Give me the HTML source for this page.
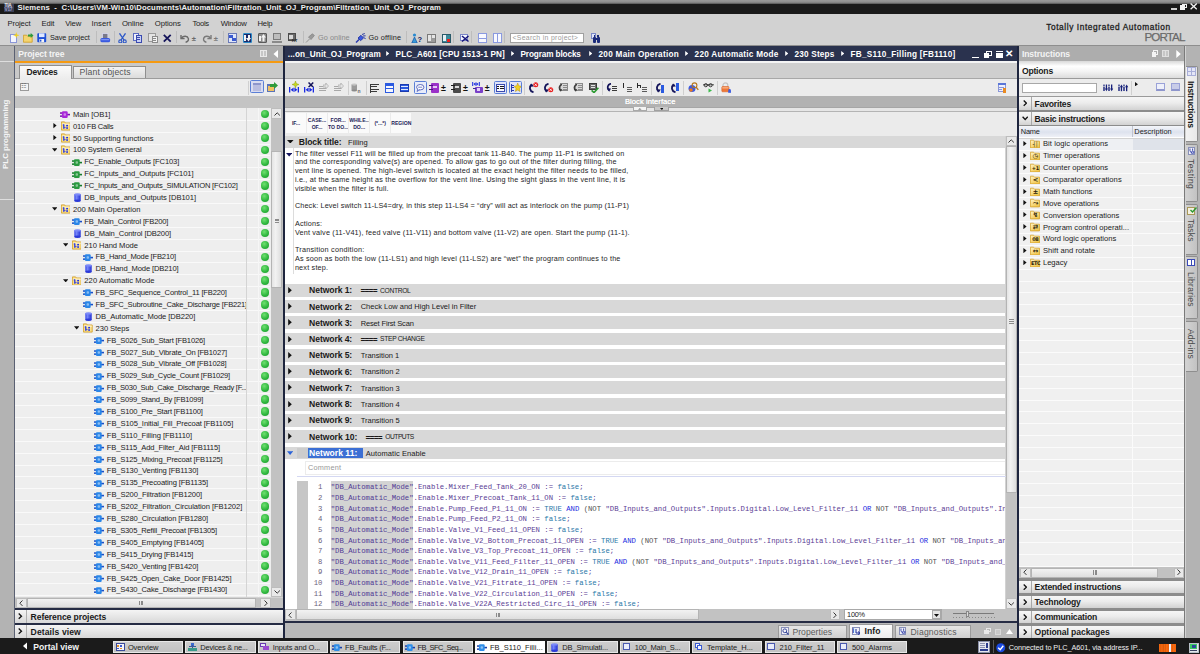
<!DOCTYPE html><html><head><meta charset="utf-8"><title>Siemens - Filtration_Unit_OJ_Program</title><style>
html,body{margin:0;padding:0;}
body{width:1200px;height:654px;overflow:hidden;background:#d2d2d2;font-family:"Liberation Sans",sans-serif;position:relative;}
#r{position:absolute;left:0;top:0;width:1200px;height:654px;overflow:hidden;}
#r div,#r span,#r svg{position:absolute;}
#r span{white-space:pre;}
.m{font-family:"Liberation Mono",monospace;}
</style></head><body><div id="r">
<div style="left:0px;top:0px;width:1200px;height:4.6px;background:linear-gradient(#9a9a9a,#8c8c8c 45%,#5a5a5a 75%,#1c1c1c);"></div>
<div style="left:0px;top:4.4px;width:1200px;height:9.5px;background:#1a1a1a;"></div>
<span style="left:17.4px;top:3.18px;font-size:7.7px;line-height:9.24px;color:#f0f0f0;font-weight:bold;letter-spacing:0.119px;">Siemens  -  C:\Users\VM-Win10\Documents\Automation\Filtration_Unit_OJ_Program\Filtration_Unit_OJ_Program</span>
<div style="left:3.6px;top:3.9px;width:10px;height:8.6px;background:#3a3f55;"></div>
<span style="left:4.6px;top:3.32px;font-size:4.8px;line-height:5.76px;color:#e8e8e8;font-weight:bold;letter-spacing:-0.3px;">TIA</span>
<span style="left:4.6px;top:7.42px;font-size:4.8px;line-height:5.76px;color:#9aa0c8;font-weight:bold;letter-spacing:-0.3px;">V17</span>
<div style="left:1170.5px;top:8.2px;width:6px;height:1.6px;background:#d0d0d0;"></div>
<div style="left:1182px;top:3.7px;width:4.6px;height:4.6px;background:transparent;border:1.1px solid #f0f0f0;box-sizing:border-box;"></div>
<div style="left:1180.2px;top:5.3px;width:4.6px;height:4.4px;background:#f4f4f4;"></div>
<svg style="left:1189.8px;top:3.4px" width="7.4" height="6.8" viewBox="0 0 7.4 6.8"><path d="M0.6 0.5L6.8 6.3M6.8 0.5L0.6 6.3" stroke="#f4f4f4" stroke-width="1.3"/></svg>
<div style="left:0px;top:13.9px;width:1200px;height:32.2px;background:#d2d2d2;"></div>
<span style="left:7.5px;top:18.98px;font-size:7.7px;line-height:9.24px;color:#222;letter-spacing:-0.140px;">Project</span>
<span style="left:41.4px;top:18.98px;font-size:7.7px;line-height:9.24px;color:#222;letter-spacing:-0.083px;">Edit</span>
<span style="left:65.2px;top:18.98px;font-size:7.7px;line-height:9.24px;color:#222;letter-spacing:-0.144px;">View</span>
<span style="left:91.5px;top:18.98px;font-size:7.7px;line-height:9.24px;color:#222;letter-spacing:0.073px;">Insert</span>
<span style="left:121.9px;top:18.98px;font-size:7.7px;line-height:9.24px;color:#222;letter-spacing:-0.087px;">Online</span>
<span style="left:154.8px;top:18.98px;font-size:7.7px;line-height:9.24px;color:#222;letter-spacing:-0.083px;">Options</span>
<span style="left:192.6px;top:18.98px;font-size:7.7px;line-height:9.24px;color:#222;letter-spacing:-0.338px;">Tools</span>
<span style="left:220.7px;top:18.98px;font-size:7.7px;line-height:9.24px;color:#222;letter-spacing:-0.249px;">Window</span>
<span style="left:257.6px;top:18.98px;font-size:7.7px;line-height:9.24px;color:#222;letter-spacing:-0.271px;">Help</span>
<span style="left:1046.2px;top:22.82px;font-size:8.3px;line-height:9.96px;color:#222222;letter-spacing:0.603px;-webkit-text-stroke:0.3px #222;">Totally Integrated Automation</span>
<span style="left:1144.5px;top:29.74px;font-size:11.6px;line-height:13.92px;color:#6a6a6a;letter-spacing:-0.886px;-webkit-text-stroke:0.25px #6a6a6a;">PORTAL</span>
<span style="left:49.9px;top:34.02px;font-size:7.3px;line-height:8.76px;color:#222;letter-spacing:-0.060px;">Save project</span>
<span style="left:318.1px;top:34.02px;font-size:7.3px;line-height:8.76px;color:#8a8a8a;letter-spacing:0.044px;">Go online</span>
<span style="left:368.5px;top:34.02px;font-size:7.3px;line-height:8.76px;color:#222;letter-spacing:0.166px;">Go offline</span>
<div style="left:510px;top:32.5px;width:73.5px;height:10.5px;background:#ffffff;border:1px solid #a0a0a0;box-sizing:border-box;"></div>
<span style="left:512.4px;top:34.06px;font-size:6.9px;line-height:8.28px;color:#9a9a9a;letter-spacing:0.319px;">&lt;Search in project&gt;</span>
<div style="left:95.5px;top:31px;width:1px;height:12px;background:#bdbdbd;"></div>
<div style="left:113.5px;top:31px;width:1px;height:12px;background:#bdbdbd;"></div>
<div style="left:176px;top:31px;width:1px;height:12px;background:#bdbdbd;"></div>
<div style="left:222.5px;top:31px;width:1px;height:12px;background:#bdbdbd;"></div>
<div style="left:302.5px;top:31px;width:1px;height:12px;background:#bdbdbd;"></div>
<div style="left:406px;top:31px;width:1px;height:12px;background:#bdbdbd;"></div>
<div style="left:453px;top:31px;width:1px;height:12px;background:#bdbdbd;"></div>
<div style="left:471px;top:31px;width:1px;height:12px;background:#bdbdbd;"></div>
<div style="left:504px;top:31px;width:1px;height:12px;background:#bdbdbd;"></div>
<div style="left:0px;top:45.3px;width:1200px;height:1px;background:#8e8e8e;"></div>
<div style="left:0px;top:46px;width:14px;height:592px;background:#b3b3b3;"></div>
<div style="left:0px;top:61px;width:14px;height:1.2px;background:#dedede;"></div>
<div style="left:0px;top:199px;width:14px;height:1.2px;background:#dedede;"></div>
<div style="left:13.8px;top:46px;width:1.4px;height:592px;background:#5a6072;"></div>
<span style="font-size:8px;line-height:10px;color:#f6f6f6;transform-origin:0 0;font-weight:bold;letter-spacing:-0.027px;left:1.30px;top:168.60px;transform:rotate(-90deg);">PLC programming</span>
<div style="left:15.2px;top:46px;width:268.0px;height:15px;background:#adadad;"></div>
<span style="left:18.3px;top:49.04px;font-size:8.6px;line-height:10.32px;color:#f4f4f4;font-weight:bold;letter-spacing:-0.091px;">Project tree</span>
<div style="left:15.2px;top:60.8px;width:268.0px;height:2.4px;background:#f59a12;"></div>
<div style="left:260.3px;top:50px;width:6.6px;height:7px;background:#c6c6c6;border:1px solid #e8e8e8;box-sizing:border-box;"></div>
<div style="left:262.6px;top:50px;width:0.9px;height:7px;background:#e8e8e8;"></div>
<svg style="left:273px;top:49.5px" width="6" height="8" viewBox="0 0 6 8"><path d="M5 0 L0.5 4 L5 8Z" fill="#fff"/></svg>
<div style="left:15.2px;top:63.2px;width:268.0px;height:15.5px;background:#c9c9c9;"></div>
<div style="left:15.2px;top:78px;width:268.0px;height:1px;background:#9c9c9c;"></div>
<div style="left:19px;top:65px;width:53px;height:14.3px;background:linear-gradient(#fafafa,#ececec);border:1px solid #8f8f8f;border-bottom:none;box-sizing:border-box;"></div>
<span style="left:26.6px;top:66.60px;font-size:8.5px;line-height:10.20px;color:#1a1a1a;font-weight:bold;letter-spacing:-0.173px;">Devices</span>
<div style="left:72.8px;top:66px;width:73.2px;height:12.3px;background:linear-gradient(#f2f2f2,#dcdcdc);border:1px solid #8f8f8f;border-bottom:none;box-sizing:border-box;"></div>
<span style="left:79.6px;top:66.78px;font-size:8.7px;line-height:10.44px;color:#555;letter-spacing:0.112px;">Plant objects</span>
<div style="left:15.2px;top:79px;width:268.0px;height:16.7px;background:#ececec;"></div>
<div style="left:248px;top:80.5px;width:1px;height:14px;background:#d0d0d0;"></div>
<div style="left:250px;top:80.3px;width:13.5px;height:13.2px;background:#d9dcf0;border:1px solid #5b7fd6;border-radius:1.5px;box-sizing:border-box;"></div>
<div style="left:252.5px;top:83px;width:8.5px;height:7.5px;background:#b9bde0;border-top:2px solid #8e96cc;box-sizing:border-box;"></div>
<div style="left:19.5px;top:82.5px;width:9px;height:8.5px;background:#f4f4f4;border:1px solid #9a9a9a;box-sizing:border-box;"></div>
<span style="left:21px;top:83.40px;font-size:6px;line-height:7.20px;color:#555;">☷</span>
<div style="left:266.5px;top:84px;width:8px;height:7.5px;background:#5a73b8;"></div>
<div style="left:267.5px;top:86px;width:6px;height:4.5px;background:#f0c060;"></div>
<svg style="left:269.5px;top:81.5px" width="8" height="7" viewBox="0 0 8 7"><path d="M0 2h4V0l4 3.5L4 7V5H0z" fill="#2e9a3c"/></svg>
<div style="left:15.2px;top:95.7px;width:268.0px;height:12.3px;background:#c4c4c4;"></div>
<div style="left:15.2px;top:108.1px;width:268.0px;height:489.19999999999993px;background:#eeeeee;"></div>
<div style="left:15.2px;top:119.74px;width:255px;height:0.9px;background:#f9f9f9;"></div>
<svg style="left:60.300000000000004px;top:111.05px" width="10" height="7.2" viewBox="0 0 10 7.2"><rect x="0" y="1.3" width="3" height="1.5" fill="#7a10b0"/><rect x="0" y="4.4" width="3" height="1.5" fill="#7a10b0"/><rect x="7" y="2.8" width="3" height="1.6" fill="#7a10b0"/><rect x="1.9" y="0.3" width="5.8" height="6.6" rx="1.2" fill="#a828d8"/><rect x="3.6" y="2.3" width="2.4" height="2.4" rx="0.8" fill="#ffffff" opacity="0.45"/></svg>
<span style="left:73.1px;top:109.79px;font-size:7.6px;line-height:9.12px;color:#1c1c1c;letter-spacing:-0.076px;">Main [OB1]</span>
<div style="left:260.6px;top:109.95px;width:8.4px;height:8.4px;border-radius:50%;background:radial-gradient(circle at 40% 35%,#6fe070,#2cb43c 60%,#1f9a30);"></div>
<div style="left:15.2px;top:131.63px;width:255px;height:0.9px;background:#f9f9f9;"></div>
<svg style="left:60.6px;top:121.24px" width="9.6" height="9.6" viewBox="0 0 9.6 9.6"><path d="M0.4 0.9h3.2l0.8 1.1h4.8v7.1H0.4z" fill="#fae08c" stroke="#d29a1c" stroke-width="0.8"/><rect x="0.9" y="2.5" width="7.8" height="1.6" fill="#fdf0c0"/><rect x="2.2" y="3.4" width="1.2" height="4.4" fill="#1c2ee6"/><rect x="1.7" y="3.4" width="1" height="1" fill="#1c2ee6"/><rect x="3.4" y="6" width="1" height="1.1" fill="#1c2ee6"/><rect x="5.2" y="3.9" width="1.8" height="1.5" fill="#1c2ee6"/><rect x="5.2" y="6.3" width="1.8" height="1.5" fill="#1c2ee6"/></svg>
<svg style="left:52.6px;top:123.34px" width="4" height="5.2" viewBox="0 0 4 5.2"><path d="M0.4 0L3.6 2.6L0.4 5.2z" fill="#111"/></svg>
<span style="left:73.1px;top:121.68px;font-size:7.6px;line-height:9.12px;color:#1c1c1c;letter-spacing:-0.271px;">010 FB Calls</span>
<div style="left:260.6px;top:121.84px;width:8.4px;height:8.4px;border-radius:50%;background:radial-gradient(circle at 40% 35%,#6fe070,#2cb43c 60%,#1f9a30);"></div>
<div style="left:15.2px;top:143.51999999999998px;width:255px;height:0.9px;background:#f9f9f9;"></div>
<svg style="left:60.6px;top:133.13px" width="9.6" height="9.6" viewBox="0 0 9.6 9.6"><path d="M0.4 0.9h3.2l0.8 1.1h4.8v7.1H0.4z" fill="#fae08c" stroke="#d29a1c" stroke-width="0.8"/><rect x="0.9" y="2.5" width="7.8" height="1.6" fill="#fdf0c0"/><rect x="2.2" y="3.4" width="1.2" height="4.4" fill="#1c2ee6"/><rect x="1.7" y="3.4" width="1" height="1" fill="#1c2ee6"/><rect x="3.4" y="6" width="1" height="1.1" fill="#1c2ee6"/><rect x="5.2" y="3.9" width="1.8" height="1.5" fill="#1c2ee6"/><rect x="5.2" y="6.3" width="1.8" height="1.5" fill="#1c2ee6"/></svg>
<svg style="left:52.6px;top:135.23px" width="4" height="5.2" viewBox="0 0 4 5.2"><path d="M0.4 0L3.6 2.6L0.4 5.2z" fill="#111"/></svg>
<span style="left:73.1px;top:133.57px;font-size:7.6px;line-height:9.12px;color:#1c1c1c;letter-spacing:0.027px;">50 Supporting functions</span>
<div style="left:260.6px;top:133.73px;width:8.4px;height:8.4px;border-radius:50%;background:radial-gradient(circle at 40% 35%,#6fe070,#2cb43c 60%,#1f9a30);"></div>
<div style="left:15.2px;top:155.40999999999997px;width:255px;height:0.9px;background:#f9f9f9;"></div>
<svg style="left:60.6px;top:145.02px" width="9.6" height="9.6" viewBox="0 0 9.6 9.6"><path d="M0.4 0.9h3.2l0.8 1.1h4.8v7.1H0.4z" fill="#fae08c" stroke="#d29a1c" stroke-width="0.8"/><rect x="0.9" y="2.5" width="7.8" height="1.6" fill="#fdf0c0"/><rect x="2.2" y="3.4" width="1.2" height="4.4" fill="#1c2ee6"/><rect x="1.7" y="3.4" width="1" height="1" fill="#1c2ee6"/><rect x="3.4" y="6" width="1" height="1.1" fill="#1c2ee6"/><rect x="5.2" y="3.9" width="1.8" height="1.5" fill="#1c2ee6"/><rect x="5.2" y="6.3" width="1.8" height="1.5" fill="#1c2ee6"/></svg>
<svg style="left:51.6px;top:147.92px" width="5.4" height="3.6" viewBox="0 0 5.4 3.6"><path d="M0 0.2h5.4L2.7 3.4z" fill="#111"/></svg>
<span style="left:73.1px;top:145.46px;font-size:7.6px;line-height:9.12px;color:#1c1c1c;letter-spacing:-0.037px;">100 System General</span>
<div style="left:260.6px;top:145.62px;width:8.4px;height:8.4px;border-radius:50%;background:radial-gradient(circle at 40% 35%,#6fe070,#2cb43c 60%,#1f9a30);"></div>
<div style="left:15.2px;top:167.3px;width:255px;height:0.9px;background:#f9f9f9;"></div>
<svg style="left:71.55px;top:158.61px" width="10" height="7.2" viewBox="0 0 10 7.2"><rect x="0" y="1.3" width="3" height="1.5" fill="#157a2c"/><rect x="0" y="4.4" width="3" height="1.5" fill="#157a2c"/><rect x="7" y="2.8" width="3" height="1.6" fill="#157a2c"/><rect x="1.9" y="0.3" width="5.8" height="6.6" rx="1.2" fill="#2a9a40"/><rect x="3.6" y="2.3" width="2.4" height="2.4" rx="0.8" fill="#ffffff" opacity="0.45"/></svg>
<span style="left:84.35px;top:157.35px;font-size:7.6px;line-height:9.12px;color:#1c1c1c;letter-spacing:-0.124px;">FC_Enable_Outputs [FC103]</span>
<div style="left:260.6px;top:157.51px;width:8.4px;height:8.4px;border-radius:50%;background:radial-gradient(circle at 40% 35%,#6fe070,#2cb43c 60%,#1f9a30);"></div>
<div style="left:15.2px;top:179.19px;width:255px;height:0.9px;background:#f9f9f9;"></div>
<svg style="left:71.55px;top:170.50px" width="10" height="7.2" viewBox="0 0 10 7.2"><rect x="0" y="1.3" width="3" height="1.5" fill="#157a2c"/><rect x="0" y="4.4" width="3" height="1.5" fill="#157a2c"/><rect x="7" y="2.8" width="3" height="1.6" fill="#157a2c"/><rect x="1.9" y="0.3" width="5.8" height="6.6" rx="1.2" fill="#2a9a40"/><rect x="3.6" y="2.3" width="2.4" height="2.4" rx="0.8" fill="#ffffff" opacity="0.45"/></svg>
<span style="left:84.35px;top:169.24px;font-size:7.6px;line-height:9.12px;color:#1c1c1c;letter-spacing:-0.094px;">FC_Inputs_and_Outputs [FC101]</span>
<div style="left:260.6px;top:169.40px;width:8.4px;height:8.4px;border-radius:50%;background:radial-gradient(circle at 40% 35%,#6fe070,#2cb43c 60%,#1f9a30);"></div>
<div style="left:15.2px;top:191.07999999999998px;width:255px;height:0.9px;background:#f9f9f9;"></div>
<svg style="left:71.55px;top:182.39px" width="10" height="7.2" viewBox="0 0 10 7.2"><rect x="0" y="1.3" width="3" height="1.5" fill="#157a2c"/><rect x="0" y="4.4" width="3" height="1.5" fill="#157a2c"/><rect x="7" y="2.8" width="3" height="1.6" fill="#157a2c"/><rect x="1.9" y="0.3" width="5.8" height="6.6" rx="1.2" fill="#2a9a40"/><rect x="3.6" y="2.3" width="2.4" height="2.4" rx="0.8" fill="#ffffff" opacity="0.45"/></svg>
<span style="left:84.35px;top:181.13px;font-size:7.6px;line-height:9.12px;color:#1c1c1c;letter-spacing:-0.218px;">FC_Inputs_and_Outputs_SIMULATION [FC102]</span>
<div style="left:260.6px;top:181.29px;width:8.4px;height:8.4px;border-radius:50%;background:radial-gradient(circle at 40% 35%,#6fe070,#2cb43c 60%,#1f9a30);"></div>
<div style="left:15.2px;top:202.96999999999997px;width:255px;height:0.9px;background:#f9f9f9;"></div>
<svg style="left:73.85px;top:193.08px" width="7" height="9" viewBox="0 0 7 9"><defs><linearGradient id="dg" x1="0" x2="1"><stop offset="0" stop-color="#3a4ae8"/><stop offset="0.35" stop-color="#7484f8"/><stop offset="1" stop-color="#2230d4"/></linearGradient></defs><rect x="0.3" y="1.2" width="6.4" height="6.6" fill="url(#dg)"/><ellipse cx="3.5" cy="7.7" rx="3.2" ry="1.2" fill="#2c3ad8"/><ellipse cx="3.5" cy="1.4" rx="3.2" ry="1.2" fill="#7c8af8"/></svg>
<span style="left:84.35px;top:193.02px;font-size:7.6px;line-height:9.12px;color:#1c1c1c;letter-spacing:-0.035px;">DB_Inputs_and_Outputs [DB101]</span>
<div style="left:260.6px;top:193.18px;width:8.4px;height:8.4px;border-radius:50%;background:radial-gradient(circle at 40% 35%,#6fe070,#2cb43c 60%,#1f9a30);"></div>
<div style="left:15.2px;top:214.86px;width:255px;height:0.9px;background:#f9f9f9;"></div>
<svg style="left:60.6px;top:204.47px" width="9.6" height="9.6" viewBox="0 0 9.6 9.6"><path d="M0.4 0.9h3.2l0.8 1.1h4.8v7.1H0.4z" fill="#fae08c" stroke="#d29a1c" stroke-width="0.8"/><rect x="0.9" y="2.5" width="7.8" height="1.6" fill="#fdf0c0"/><rect x="2.2" y="3.4" width="1.2" height="4.4" fill="#1c2ee6"/><rect x="1.7" y="3.4" width="1" height="1" fill="#1c2ee6"/><rect x="3.4" y="6" width="1" height="1.1" fill="#1c2ee6"/><rect x="5.2" y="3.9" width="1.8" height="1.5" fill="#1c2ee6"/><rect x="5.2" y="6.3" width="1.8" height="1.5" fill="#1c2ee6"/></svg>
<svg style="left:51.6px;top:207.37px" width="5.4" height="3.6" viewBox="0 0 5.4 3.6"><path d="M0 0.2h5.4L2.7 3.4z" fill="#111"/></svg>
<span style="left:73.1px;top:204.91px;font-size:7.6px;line-height:9.12px;color:#1c1c1c;letter-spacing:0.041px;">200 Main Operation</span>
<div style="left:260.6px;top:205.07px;width:8.4px;height:8.4px;border-radius:50%;background:radial-gradient(circle at 40% 35%,#6fe070,#2cb43c 60%,#1f9a30);"></div>
<div style="left:15.2px;top:226.75px;width:255px;height:0.9px;background:#f9f9f9;"></div>
<svg style="left:71.55px;top:218.06px" width="10" height="7.2" viewBox="0 0 10 7.2"><rect x="0" y="1.3" width="3" height="1.5" fill="#1a50c8"/><rect x="0" y="4.4" width="3" height="1.5" fill="#1a50c8"/><rect x="7" y="2.8" width="3" height="1.6" fill="#1a50c8"/><rect x="1.9" y="0.3" width="5.8" height="6.6" rx="1.2" fill="#2a86e8"/><rect x="3.6" y="2.3" width="2.4" height="2.4" rx="0.8" fill="#ffffff" opacity="0.45"/></svg>
<span style="left:84.35px;top:216.80px;font-size:7.6px;line-height:9.12px;color:#1c1c1c;letter-spacing:-0.166px;">FB_Main_Control [FB200]</span>
<div style="left:260.6px;top:216.96px;width:8.4px;height:8.4px;border-radius:50%;background:radial-gradient(circle at 40% 35%,#6fe070,#2cb43c 60%,#1f9a30);"></div>
<div style="left:15.2px;top:238.64px;width:255px;height:0.9px;background:#f9f9f9;"></div>
<svg style="left:73.85px;top:228.75px" width="7" height="9" viewBox="0 0 7 9"><defs><linearGradient id="dg" x1="0" x2="1"><stop offset="0" stop-color="#3a4ae8"/><stop offset="0.35" stop-color="#7484f8"/><stop offset="1" stop-color="#2230d4"/></linearGradient></defs><rect x="0.3" y="1.2" width="6.4" height="6.6" fill="url(#dg)"/><ellipse cx="3.5" cy="7.7" rx="3.2" ry="1.2" fill="#2c3ad8"/><ellipse cx="3.5" cy="1.4" rx="3.2" ry="1.2" fill="#7c8af8"/></svg>
<span style="left:84.35px;top:228.69px;font-size:7.6px;line-height:9.12px;color:#1c1c1c;letter-spacing:-0.124px;">DB_Main_Control [DB200]</span>
<div style="left:260.6px;top:228.85px;width:8.4px;height:8.4px;border-radius:50%;background:radial-gradient(circle at 40% 35%,#6fe070,#2cb43c 60%,#1f9a30);"></div>
<div style="left:15.2px;top:250.53000000000003px;width:255px;height:0.9px;background:#f9f9f9;"></div>
<svg style="left:71.85px;top:240.14px" width="9.6" height="9.6" viewBox="0 0 9.6 9.6"><path d="M0.4 0.9h3.2l0.8 1.1h4.8v7.1H0.4z" fill="#fae08c" stroke="#d29a1c" stroke-width="0.8"/><rect x="0.9" y="2.5" width="7.8" height="1.6" fill="#fdf0c0"/><rect x="2.2" y="3.4" width="1.2" height="4.4" fill="#1c2ee6"/><rect x="1.7" y="3.4" width="1" height="1" fill="#1c2ee6"/><rect x="3.4" y="6" width="1" height="1.1" fill="#1c2ee6"/><rect x="5.2" y="3.9" width="1.8" height="1.5" fill="#1c2ee6"/><rect x="5.2" y="6.3" width="1.8" height="1.5" fill="#1c2ee6"/></svg>
<svg style="left:62.849999999999994px;top:243.04px" width="5.4" height="3.6" viewBox="0 0 5.4 3.6"><path d="M0 0.2h5.4L2.7 3.4z" fill="#111"/></svg>
<span style="left:84.35px;top:240.58px;font-size:7.6px;line-height:9.12px;color:#1c1c1c;letter-spacing:-0.033px;">210 Hand Mode</span>
<div style="left:260.6px;top:240.74px;width:8.4px;height:8.4px;border-radius:50%;background:radial-gradient(circle at 40% 35%,#6fe070,#2cb43c 60%,#1f9a30);"></div>
<div style="left:15.2px;top:262.42px;width:255px;height:0.9px;background:#f9f9f9;"></div>
<svg style="left:82.8px;top:253.73px" width="10" height="7.2" viewBox="0 0 10 7.2"><rect x="0" y="1.3" width="3" height="1.5" fill="#1a50c8"/><rect x="0" y="4.4" width="3" height="1.5" fill="#1a50c8"/><rect x="7" y="2.8" width="3" height="1.6" fill="#1a50c8"/><rect x="1.9" y="0.3" width="5.8" height="6.6" rx="1.2" fill="#2a86e8"/><rect x="3.6" y="2.3" width="2.4" height="2.4" rx="0.8" fill="#ffffff" opacity="0.45"/></svg>
<span style="left:95.6px;top:252.47px;font-size:7.6px;line-height:9.12px;color:#1c1c1c;letter-spacing:-0.185px;">FB_Hand_Mode [FB210]</span>
<div style="left:260.6px;top:252.63px;width:8.4px;height:8.4px;border-radius:50%;background:radial-gradient(circle at 40% 35%,#6fe070,#2cb43c 60%,#1f9a30);"></div>
<div style="left:15.2px;top:274.30999999999995px;width:255px;height:0.9px;background:#f9f9f9;"></div>
<svg style="left:85.1px;top:264.42px" width="7" height="9" viewBox="0 0 7 9"><defs><linearGradient id="dg" x1="0" x2="1"><stop offset="0" stop-color="#3a4ae8"/><stop offset="0.35" stop-color="#7484f8"/><stop offset="1" stop-color="#2230d4"/></linearGradient></defs><rect x="0.3" y="1.2" width="6.4" height="6.6" fill="url(#dg)"/><ellipse cx="3.5" cy="7.7" rx="3.2" ry="1.2" fill="#2c3ad8"/><ellipse cx="3.5" cy="1.4" rx="3.2" ry="1.2" fill="#7c8af8"/></svg>
<span style="left:95.6px;top:264.36px;font-size:7.6px;line-height:9.12px;color:#1c1c1c;letter-spacing:-0.142px;">DB_Hand_Mode [DB210]</span>
<div style="left:260.6px;top:264.52px;width:8.4px;height:8.4px;border-radius:50%;background:radial-gradient(circle at 40% 35%,#6fe070,#2cb43c 60%,#1f9a30);"></div>
<div style="left:15.2px;top:286.2px;width:255px;height:0.9px;background:#f9f9f9;"></div>
<svg style="left:71.85px;top:275.81px" width="9.6" height="9.6" viewBox="0 0 9.6 9.6"><path d="M0.4 0.9h3.2l0.8 1.1h4.8v7.1H0.4z" fill="#fae08c" stroke="#d29a1c" stroke-width="0.8"/><rect x="0.9" y="2.5" width="7.8" height="1.6" fill="#fdf0c0"/><rect x="2.2" y="3.4" width="1.2" height="4.4" fill="#1c2ee6"/><rect x="1.7" y="3.4" width="1" height="1" fill="#1c2ee6"/><rect x="3.4" y="6" width="1" height="1.1" fill="#1c2ee6"/><rect x="5.2" y="3.9" width="1.8" height="1.5" fill="#1c2ee6"/><rect x="5.2" y="6.3" width="1.8" height="1.5" fill="#1c2ee6"/></svg>
<svg style="left:62.849999999999994px;top:278.71px" width="5.4" height="3.6" viewBox="0 0 5.4 3.6"><path d="M0 0.2h5.4L2.7 3.4z" fill="#111"/></svg>
<span style="left:84.35px;top:276.25px;font-size:7.6px;line-height:9.12px;color:#1c1c1c;letter-spacing:0.054px;">220 Automatic Mode</span>
<div style="left:260.6px;top:276.41px;width:8.4px;height:8.4px;border-radius:50%;background:radial-gradient(circle at 40% 35%,#6fe070,#2cb43c 60%,#1f9a30);"></div>
<div style="left:15.2px;top:298.09000000000003px;width:255px;height:0.9px;background:#f9f9f9;"></div>
<svg style="left:82.8px;top:289.40px" width="10" height="7.2" viewBox="0 0 10 7.2"><rect x="0" y="1.3" width="3" height="1.5" fill="#1a50c8"/><rect x="0" y="4.4" width="3" height="1.5" fill="#1a50c8"/><rect x="7" y="2.8" width="3" height="1.6" fill="#1a50c8"/><rect x="1.9" y="0.3" width="5.8" height="6.6" rx="1.2" fill="#2a86e8"/><rect x="3.6" y="2.3" width="2.4" height="2.4" rx="0.8" fill="#ffffff" opacity="0.45"/></svg>
<span style="left:95.6px;top:288.14px;font-size:7.6px;line-height:9.12px;color:#1c1c1c;letter-spacing:-0.172px;">FB_SFC_Sequence_Control_11 [FB220]</span>
<div style="left:260.6px;top:288.30px;width:8.4px;height:8.4px;border-radius:50%;background:radial-gradient(circle at 40% 35%,#6fe070,#2cb43c 60%,#1f9a30);"></div>
<div style="left:15.2px;top:309.98px;width:255px;height:0.9px;background:#f9f9f9;"></div>
<svg style="left:82.8px;top:301.29px" width="10" height="7.2" viewBox="0 0 10 7.2"><rect x="0" y="1.3" width="3" height="1.5" fill="#1a50c8"/><rect x="0" y="4.4" width="3" height="1.5" fill="#1a50c8"/><rect x="7" y="2.8" width="3" height="1.6" fill="#1a50c8"/><rect x="1.9" y="0.3" width="5.8" height="6.6" rx="1.2" fill="#2a86e8"/><rect x="3.6" y="2.3" width="2.4" height="2.4" rx="0.8" fill="#ffffff" opacity="0.45"/></svg>
<span style="left:95.6px;top:300.03px;font-size:7.6px;line-height:9.12px;color:#1c1c1c;letter-spacing:-0.193px;">FB_SFC_Subroutine_Cake_Discharge [FB221]</span>
<div style="left:260.6px;top:300.19px;width:8.4px;height:8.4px;border-radius:50%;background:radial-gradient(circle at 40% 35%,#6fe070,#2cb43c 60%,#1f9a30);"></div>
<div style="left:15.2px;top:321.87px;width:255px;height:0.9px;background:#f9f9f9;"></div>
<svg style="left:85.1px;top:311.98px" width="7" height="9" viewBox="0 0 7 9"><defs><linearGradient id="dg" x1="0" x2="1"><stop offset="0" stop-color="#3a4ae8"/><stop offset="0.35" stop-color="#7484f8"/><stop offset="1" stop-color="#2230d4"/></linearGradient></defs><rect x="0.3" y="1.2" width="6.4" height="6.6" fill="url(#dg)"/><ellipse cx="3.5" cy="7.7" rx="3.2" ry="1.2" fill="#2c3ad8"/><ellipse cx="3.5" cy="1.4" rx="3.2" ry="1.2" fill="#7c8af8"/></svg>
<span style="left:95.6px;top:311.92px;font-size:7.6px;line-height:9.12px;color:#1c1c1c;letter-spacing:-0.063px;">DB_Automatic_Mode [DB220]</span>
<div style="left:260.6px;top:312.08px;width:8.4px;height:8.4px;border-radius:50%;background:radial-gradient(circle at 40% 35%,#6fe070,#2cb43c 60%,#1f9a30);"></div>
<div style="left:15.2px;top:333.76px;width:255px;height:0.9px;background:#f9f9f9;"></div>
<svg style="left:83.1px;top:323.37px" width="9.6" height="9.6" viewBox="0 0 9.6 9.6"><path d="M0.4 0.9h3.2l0.8 1.1h4.8v7.1H0.4z" fill="#fae08c" stroke="#d29a1c" stroke-width="0.8"/><rect x="0.9" y="2.5" width="7.8" height="1.6" fill="#fdf0c0"/><rect x="2.2" y="3.4" width="1.2" height="4.4" fill="#1c2ee6"/><rect x="1.7" y="3.4" width="1" height="1" fill="#1c2ee6"/><rect x="3.4" y="6" width="1" height="1.1" fill="#1c2ee6"/><rect x="5.2" y="3.9" width="1.8" height="1.5" fill="#1c2ee6"/><rect x="5.2" y="6.3" width="1.8" height="1.5" fill="#1c2ee6"/></svg>
<svg style="left:74.1px;top:326.27px" width="5.4" height="3.6" viewBox="0 0 5.4 3.6"><path d="M0 0.2h5.4L2.7 3.4z" fill="#111"/></svg>
<span style="left:95.6px;top:323.81px;font-size:7.6px;line-height:9.12px;color:#1c1c1c;letter-spacing:-0.075px;">230 Steps</span>
<div style="left:260.6px;top:323.97px;width:8.4px;height:8.4px;border-radius:50%;background:radial-gradient(circle at 40% 35%,#6fe070,#2cb43c 60%,#1f9a30);"></div>
<div style="left:15.2px;top:345.65px;width:255px;height:0.9px;background:#f9f9f9;"></div>
<svg style="left:94.05px;top:336.96px" width="10" height="7.2" viewBox="0 0 10 7.2"><rect x="0" y="1.3" width="3" height="1.5" fill="#1a50c8"/><rect x="0" y="4.4" width="3" height="1.5" fill="#1a50c8"/><rect x="7" y="2.8" width="3" height="1.6" fill="#1a50c8"/><rect x="1.9" y="0.3" width="5.8" height="6.6" rx="1.2" fill="#2a86e8"/><rect x="3.6" y="2.3" width="2.4" height="2.4" rx="0.8" fill="#ffffff" opacity="0.45"/></svg>
<span style="left:106.85px;top:335.70px;font-size:7.6px;line-height:9.12px;color:#1c1c1c;letter-spacing:-0.170px;">FB_S026_Sub_Start [FB1026]</span>
<div style="left:260.6px;top:335.86px;width:8.4px;height:8.4px;border-radius:50%;background:radial-gradient(circle at 40% 35%,#6fe070,#2cb43c 60%,#1f9a30);"></div>
<div style="left:15.2px;top:357.53999999999996px;width:255px;height:0.9px;background:#f9f9f9;"></div>
<svg style="left:94.05px;top:348.85px" width="10" height="7.2" viewBox="0 0 10 7.2"><rect x="0" y="1.3" width="3" height="1.5" fill="#1a50c8"/><rect x="0" y="4.4" width="3" height="1.5" fill="#1a50c8"/><rect x="7" y="2.8" width="3" height="1.6" fill="#1a50c8"/><rect x="1.9" y="0.3" width="5.8" height="6.6" rx="1.2" fill="#2a86e8"/><rect x="3.6" y="2.3" width="2.4" height="2.4" rx="0.8" fill="#ffffff" opacity="0.45"/></svg>
<span style="left:106.85px;top:347.59px;font-size:7.6px;line-height:9.12px;color:#1c1c1c;letter-spacing:-0.149px;">FB_S027_Sub_Vibrate_On [FB1027]</span>
<div style="left:260.6px;top:347.75px;width:8.4px;height:8.4px;border-radius:50%;background:radial-gradient(circle at 40% 35%,#6fe070,#2cb43c 60%,#1f9a30);"></div>
<div style="left:15.2px;top:369.42999999999995px;width:255px;height:0.9px;background:#f9f9f9;"></div>
<svg style="left:94.05px;top:360.74px" width="10" height="7.2" viewBox="0 0 10 7.2"><rect x="0" y="1.3" width="3" height="1.5" fill="#1a50c8"/><rect x="0" y="4.4" width="3" height="1.5" fill="#1a50c8"/><rect x="7" y="2.8" width="3" height="1.6" fill="#1a50c8"/><rect x="1.9" y="0.3" width="5.8" height="6.6" rx="1.2" fill="#2a86e8"/><rect x="3.6" y="2.3" width="2.4" height="2.4" rx="0.8" fill="#ffffff" opacity="0.45"/></svg>
<span style="left:106.85px;top:359.48px;font-size:7.6px;line-height:9.12px;color:#1c1c1c;letter-spacing:-0.156px;">FB_S028_Sub_Vibrate_Off [FB1028]</span>
<div style="left:260.6px;top:359.64px;width:8.4px;height:8.4px;border-radius:50%;background:radial-gradient(circle at 40% 35%,#6fe070,#2cb43c 60%,#1f9a30);"></div>
<div style="left:15.2px;top:381.32000000000005px;width:255px;height:0.9px;background:#f9f9f9;"></div>
<svg style="left:94.05px;top:372.63px" width="10" height="7.2" viewBox="0 0 10 7.2"><rect x="0" y="1.3" width="3" height="1.5" fill="#1a50c8"/><rect x="0" y="4.4" width="3" height="1.5" fill="#1a50c8"/><rect x="7" y="2.8" width="3" height="1.6" fill="#1a50c8"/><rect x="1.9" y="0.3" width="5.8" height="6.6" rx="1.2" fill="#2a86e8"/><rect x="3.6" y="2.3" width="2.4" height="2.4" rx="0.8" fill="#ffffff" opacity="0.45"/></svg>
<span style="left:106.85px;top:371.37px;font-size:7.6px;line-height:9.12px;color:#1c1c1c;letter-spacing:-0.216px;">FB_S029_Sub_Cycle_Count [FB1029]</span>
<div style="left:260.6px;top:371.53px;width:8.4px;height:8.4px;border-radius:50%;background:radial-gradient(circle at 40% 35%,#6fe070,#2cb43c 60%,#1f9a30);"></div>
<div style="left:15.2px;top:393.21000000000004px;width:255px;height:0.9px;background:#f9f9f9;"></div>
<svg style="left:94.05px;top:384.52px" width="10" height="7.2" viewBox="0 0 10 7.2"><rect x="0" y="1.3" width="3" height="1.5" fill="#1a50c8"/><rect x="0" y="4.4" width="3" height="1.5" fill="#1a50c8"/><rect x="7" y="2.8" width="3" height="1.6" fill="#1a50c8"/><rect x="1.9" y="0.3" width="5.8" height="6.6" rx="1.2" fill="#2a86e8"/><rect x="3.6" y="2.3" width="2.4" height="2.4" rx="0.8" fill="#ffffff" opacity="0.45"/></svg>
<span style="left:106.85px;top:383.26px;font-size:7.6px;line-height:9.12px;color:#1c1c1c;letter-spacing:-0.274px;">FB_S030_Sub_Cake_Discharge_Ready [F...</span>
<div style="left:260.6px;top:383.42px;width:8.4px;height:8.4px;border-radius:50%;background:radial-gradient(circle at 40% 35%,#6fe070,#2cb43c 60%,#1f9a30);"></div>
<div style="left:15.2px;top:405.1px;width:255px;height:0.9px;background:#f9f9f9;"></div>
<svg style="left:94.05px;top:396.41px" width="10" height="7.2" viewBox="0 0 10 7.2"><rect x="0" y="1.3" width="3" height="1.5" fill="#1a50c8"/><rect x="0" y="4.4" width="3" height="1.5" fill="#1a50c8"/><rect x="7" y="2.8" width="3" height="1.6" fill="#1a50c8"/><rect x="1.9" y="0.3" width="5.8" height="6.6" rx="1.2" fill="#2a86e8"/><rect x="3.6" y="2.3" width="2.4" height="2.4" rx="0.8" fill="#ffffff" opacity="0.45"/></svg>
<span style="left:106.85px;top:395.15px;font-size:7.6px;line-height:9.12px;color:#1c1c1c;letter-spacing:-0.217px;">FB_S099_Stand_By [FB1099]</span>
<div style="left:260.6px;top:395.31px;width:8.4px;height:8.4px;border-radius:50%;background:radial-gradient(circle at 40% 35%,#6fe070,#2cb43c 60%,#1f9a30);"></div>
<div style="left:15.2px;top:416.99px;width:255px;height:0.9px;background:#f9f9f9;"></div>
<svg style="left:94.05px;top:408.30px" width="10" height="7.2" viewBox="0 0 10 7.2"><rect x="0" y="1.3" width="3" height="1.5" fill="#1a50c8"/><rect x="0" y="4.4" width="3" height="1.5" fill="#1a50c8"/><rect x="7" y="2.8" width="3" height="1.6" fill="#1a50c8"/><rect x="1.9" y="0.3" width="5.8" height="6.6" rx="1.2" fill="#2a86e8"/><rect x="3.6" y="2.3" width="2.4" height="2.4" rx="0.8" fill="#ffffff" opacity="0.45"/></svg>
<span style="left:106.85px;top:407.04px;font-size:7.6px;line-height:9.12px;color:#1c1c1c;letter-spacing:-0.171px;">FB_S100_Pre_Start [FB1100]</span>
<div style="left:260.6px;top:407.20px;width:8.4px;height:8.4px;border-radius:50%;background:radial-gradient(circle at 40% 35%,#6fe070,#2cb43c 60%,#1f9a30);"></div>
<div style="left:15.2px;top:428.88px;width:255px;height:0.9px;background:#f9f9f9;"></div>
<svg style="left:94.05px;top:420.19px" width="10" height="7.2" viewBox="0 0 10 7.2"><rect x="0" y="1.3" width="3" height="1.5" fill="#1a50c8"/><rect x="0" y="4.4" width="3" height="1.5" fill="#1a50c8"/><rect x="7" y="2.8" width="3" height="1.6" fill="#1a50c8"/><rect x="1.9" y="0.3" width="5.8" height="6.6" rx="1.2" fill="#2a86e8"/><rect x="3.6" y="2.3" width="2.4" height="2.4" rx="0.8" fill="#ffffff" opacity="0.45"/></svg>
<span style="left:106.85px;top:418.93px;font-size:7.6px;line-height:9.12px;color:#1c1c1c;letter-spacing:-0.107px;">FB_S105_Initial_Fill_Precoat [FB1105]</span>
<div style="left:260.6px;top:419.09px;width:8.4px;height:8.4px;border-radius:50%;background:radial-gradient(circle at 40% 35%,#6fe070,#2cb43c 60%,#1f9a30);"></div>
<div style="left:15.2px;top:440.77px;width:255px;height:0.9px;background:#f9f9f9;"></div>
<svg style="left:94.05px;top:432.08px" width="10" height="7.2" viewBox="0 0 10 7.2"><rect x="0" y="1.3" width="3" height="1.5" fill="#1a50c8"/><rect x="0" y="4.4" width="3" height="1.5" fill="#1a50c8"/><rect x="7" y="2.8" width="3" height="1.6" fill="#1a50c8"/><rect x="1.9" y="0.3" width="5.8" height="6.6" rx="1.2" fill="#2a86e8"/><rect x="3.6" y="2.3" width="2.4" height="2.4" rx="0.8" fill="#ffffff" opacity="0.45"/></svg>
<span style="left:106.85px;top:430.82px;font-size:7.6px;line-height:9.12px;color:#1c1c1c;letter-spacing:-0.074px;">FB_S110_Filling [FB1110]</span>
<div style="left:260.6px;top:430.98px;width:8.4px;height:8.4px;border-radius:50%;background:radial-gradient(circle at 40% 35%,#6fe070,#2cb43c 60%,#1f9a30);"></div>
<div style="left:15.2px;top:452.65999999999997px;width:255px;height:0.9px;background:#f9f9f9;"></div>
<svg style="left:94.05px;top:443.97px" width="10" height="7.2" viewBox="0 0 10 7.2"><rect x="0" y="1.3" width="3" height="1.5" fill="#1a50c8"/><rect x="0" y="4.4" width="3" height="1.5" fill="#1a50c8"/><rect x="7" y="2.8" width="3" height="1.6" fill="#1a50c8"/><rect x="1.9" y="0.3" width="5.8" height="6.6" rx="1.2" fill="#2a86e8"/><rect x="3.6" y="2.3" width="2.4" height="2.4" rx="0.8" fill="#ffffff" opacity="0.45"/></svg>
<span style="left:106.85px;top:442.71px;font-size:7.6px;line-height:9.12px;color:#1c1c1c;letter-spacing:-0.120px;">FB_S115_Add_Filter_Aid [FB1115]</span>
<div style="left:260.6px;top:442.87px;width:8.4px;height:8.4px;border-radius:50%;background:radial-gradient(circle at 40% 35%,#6fe070,#2cb43c 60%,#1f9a30);"></div>
<div style="left:15.2px;top:464.54999999999995px;width:255px;height:0.9px;background:#f9f9f9;"></div>
<svg style="left:94.05px;top:455.86px" width="10" height="7.2" viewBox="0 0 10 7.2"><rect x="0" y="1.3" width="3" height="1.5" fill="#1a50c8"/><rect x="0" y="4.4" width="3" height="1.5" fill="#1a50c8"/><rect x="7" y="2.8" width="3" height="1.6" fill="#1a50c8"/><rect x="1.9" y="0.3" width="5.8" height="6.6" rx="1.2" fill="#2a86e8"/><rect x="3.6" y="2.3" width="2.4" height="2.4" rx="0.8" fill="#ffffff" opacity="0.45"/></svg>
<span style="left:106.85px;top:454.60px;font-size:7.6px;line-height:9.12px;color:#1c1c1c;letter-spacing:-0.158px;">FB_S125_Mixing_Precoat [FB1125]</span>
<div style="left:260.6px;top:454.76px;width:8.4px;height:8.4px;border-radius:50%;background:radial-gradient(circle at 40% 35%,#6fe070,#2cb43c 60%,#1f9a30);"></div>
<div style="left:15.2px;top:476.44000000000005px;width:255px;height:0.9px;background:#f9f9f9;"></div>
<svg style="left:94.05px;top:467.75px" width="10" height="7.2" viewBox="0 0 10 7.2"><rect x="0" y="1.3" width="3" height="1.5" fill="#1a50c8"/><rect x="0" y="4.4" width="3" height="1.5" fill="#1a50c8"/><rect x="7" y="2.8" width="3" height="1.6" fill="#1a50c8"/><rect x="1.9" y="0.3" width="5.8" height="6.6" rx="1.2" fill="#2a86e8"/><rect x="3.6" y="2.3" width="2.4" height="2.4" rx="0.8" fill="#ffffff" opacity="0.45"/></svg>
<span style="left:106.85px;top:466.49px;font-size:7.6px;line-height:9.12px;color:#1c1c1c;letter-spacing:-0.089px;">FB_S130_Venting [FB1130]</span>
<div style="left:260.6px;top:466.65px;width:8.4px;height:8.4px;border-radius:50%;background:radial-gradient(circle at 40% 35%,#6fe070,#2cb43c 60%,#1f9a30);"></div>
<div style="left:15.2px;top:488.33000000000004px;width:255px;height:0.9px;background:#f9f9f9;"></div>
<svg style="left:94.05px;top:479.64px" width="10" height="7.2" viewBox="0 0 10 7.2"><rect x="0" y="1.3" width="3" height="1.5" fill="#1a50c8"/><rect x="0" y="4.4" width="3" height="1.5" fill="#1a50c8"/><rect x="7" y="2.8" width="3" height="1.6" fill="#1a50c8"/><rect x="1.9" y="0.3" width="5.8" height="6.6" rx="1.2" fill="#2a86e8"/><rect x="3.6" y="2.3" width="2.4" height="2.4" rx="0.8" fill="#ffffff" opacity="0.45"/></svg>
<span style="left:106.85px;top:478.38px;font-size:7.6px;line-height:9.12px;color:#1c1c1c;letter-spacing:-0.124px;">FB_S135_Precoating [FB1135]</span>
<div style="left:260.6px;top:478.54px;width:8.4px;height:8.4px;border-radius:50%;background:radial-gradient(circle at 40% 35%,#6fe070,#2cb43c 60%,#1f9a30);"></div>
<div style="left:15.2px;top:500.22px;width:255px;height:0.9px;background:#f9f9f9;"></div>
<svg style="left:94.05px;top:491.53px" width="10" height="7.2" viewBox="0 0 10 7.2"><rect x="0" y="1.3" width="3" height="1.5" fill="#1a50c8"/><rect x="0" y="4.4" width="3" height="1.5" fill="#1a50c8"/><rect x="7" y="2.8" width="3" height="1.6" fill="#1a50c8"/><rect x="1.9" y="0.3" width="5.8" height="6.6" rx="1.2" fill="#2a86e8"/><rect x="3.6" y="2.3" width="2.4" height="2.4" rx="0.8" fill="#ffffff" opacity="0.45"/></svg>
<span style="left:106.85px;top:490.27px;font-size:7.6px;line-height:9.12px;color:#1c1c1c;letter-spacing:-0.100px;">FB_S200_Filtration [FB1200]</span>
<div style="left:260.6px;top:490.43px;width:8.4px;height:8.4px;border-radius:50%;background:radial-gradient(circle at 40% 35%,#6fe070,#2cb43c 60%,#1f9a30);"></div>
<div style="left:15.2px;top:512.11px;width:255px;height:0.9px;background:#f9f9f9;"></div>
<svg style="left:94.05px;top:503.42px" width="10" height="7.2" viewBox="0 0 10 7.2"><rect x="0" y="1.3" width="3" height="1.5" fill="#1a50c8"/><rect x="0" y="4.4" width="3" height="1.5" fill="#1a50c8"/><rect x="7" y="2.8" width="3" height="1.6" fill="#1a50c8"/><rect x="1.9" y="0.3" width="5.8" height="6.6" rx="1.2" fill="#2a86e8"/><rect x="3.6" y="2.3" width="2.4" height="2.4" rx="0.8" fill="#ffffff" opacity="0.45"/></svg>
<span style="left:106.85px;top:502.16px;font-size:7.6px;line-height:9.12px;color:#1c1c1c;letter-spacing:-0.068px;">FB_S202_Filtration_Circulation [FB1202]</span>
<div style="left:260.6px;top:502.32px;width:8.4px;height:8.4px;border-radius:50%;background:radial-gradient(circle at 40% 35%,#6fe070,#2cb43c 60%,#1f9a30);"></div>
<div style="left:15.2px;top:524.0px;width:255px;height:0.9px;background:#f9f9f9;"></div>
<svg style="left:94.05px;top:515.31px" width="10" height="7.2" viewBox="0 0 10 7.2"><rect x="0" y="1.3" width="3" height="1.5" fill="#1a50c8"/><rect x="0" y="4.4" width="3" height="1.5" fill="#1a50c8"/><rect x="7" y="2.8" width="3" height="1.6" fill="#1a50c8"/><rect x="1.9" y="0.3" width="5.8" height="6.6" rx="1.2" fill="#2a86e8"/><rect x="3.6" y="2.3" width="2.4" height="2.4" rx="0.8" fill="#ffffff" opacity="0.45"/></svg>
<span style="left:106.85px;top:514.05px;font-size:7.6px;line-height:9.12px;color:#1c1c1c;letter-spacing:-0.124px;">FB_S280_Circulation [FB1280]</span>
<div style="left:260.6px;top:514.21px;width:8.4px;height:8.4px;border-radius:50%;background:radial-gradient(circle at 40% 35%,#6fe070,#2cb43c 60%,#1f9a30);"></div>
<div style="left:15.2px;top:535.89px;width:255px;height:0.9px;background:#f9f9f9;"></div>
<svg style="left:94.05px;top:527.20px" width="10" height="7.2" viewBox="0 0 10 7.2"><rect x="0" y="1.3" width="3" height="1.5" fill="#1a50c8"/><rect x="0" y="4.4" width="3" height="1.5" fill="#1a50c8"/><rect x="7" y="2.8" width="3" height="1.6" fill="#1a50c8"/><rect x="1.9" y="0.3" width="5.8" height="6.6" rx="1.2" fill="#2a86e8"/><rect x="3.6" y="2.3" width="2.4" height="2.4" rx="0.8" fill="#ffffff" opacity="0.45"/></svg>
<span style="left:106.85px;top:525.94px;font-size:7.6px;line-height:9.12px;color:#1c1c1c;letter-spacing:-0.191px;">FB_S305_Refill_Precoat [FB1305]</span>
<div style="left:260.6px;top:526.10px;width:8.4px;height:8.4px;border-radius:50%;background:radial-gradient(circle at 40% 35%,#6fe070,#2cb43c 60%,#1f9a30);"></div>
<div style="left:15.2px;top:547.78px;width:255px;height:0.9px;background:#f9f9f9;"></div>
<svg style="left:94.05px;top:539.09px" width="10" height="7.2" viewBox="0 0 10 7.2"><rect x="0" y="1.3" width="3" height="1.5" fill="#1a50c8"/><rect x="0" y="4.4" width="3" height="1.5" fill="#1a50c8"/><rect x="7" y="2.8" width="3" height="1.6" fill="#1a50c8"/><rect x="1.9" y="0.3" width="5.8" height="6.6" rx="1.2" fill="#2a86e8"/><rect x="3.6" y="2.3" width="2.4" height="2.4" rx="0.8" fill="#ffffff" opacity="0.45"/></svg>
<span style="left:106.85px;top:537.83px;font-size:7.6px;line-height:9.12px;color:#1c1c1c;letter-spacing:-0.142px;">FB_S405_Emptying [FB1405]</span>
<div style="left:260.6px;top:537.99px;width:8.4px;height:8.4px;border-radius:50%;background:radial-gradient(circle at 40% 35%,#6fe070,#2cb43c 60%,#1f9a30);"></div>
<div style="left:15.2px;top:559.67px;width:255px;height:0.9px;background:#f9f9f9;"></div>
<svg style="left:94.05px;top:550.98px" width="10" height="7.2" viewBox="0 0 10 7.2"><rect x="0" y="1.3" width="3" height="1.5" fill="#1a50c8"/><rect x="0" y="4.4" width="3" height="1.5" fill="#1a50c8"/><rect x="7" y="2.8" width="3" height="1.6" fill="#1a50c8"/><rect x="1.9" y="0.3" width="5.8" height="6.6" rx="1.2" fill="#2a86e8"/><rect x="3.6" y="2.3" width="2.4" height="2.4" rx="0.8" fill="#ffffff" opacity="0.45"/></svg>
<span style="left:106.85px;top:549.72px;font-size:7.6px;line-height:9.12px;color:#1c1c1c;letter-spacing:-0.192px;">FB_S415_Drying [FB1415]</span>
<div style="left:260.6px;top:549.88px;width:8.4px;height:8.4px;border-radius:50%;background:radial-gradient(circle at 40% 35%,#6fe070,#2cb43c 60%,#1f9a30);"></div>
<div style="left:15.2px;top:571.5600000000001px;width:255px;height:0.9px;background:#f9f9f9;"></div>
<svg style="left:94.05px;top:562.87px" width="10" height="7.2" viewBox="0 0 10 7.2"><rect x="0" y="1.3" width="3" height="1.5" fill="#1a50c8"/><rect x="0" y="4.4" width="3" height="1.5" fill="#1a50c8"/><rect x="7" y="2.8" width="3" height="1.6" fill="#1a50c8"/><rect x="1.9" y="0.3" width="5.8" height="6.6" rx="1.2" fill="#2a86e8"/><rect x="3.6" y="2.3" width="2.4" height="2.4" rx="0.8" fill="#ffffff" opacity="0.45"/></svg>
<span style="left:106.85px;top:561.61px;font-size:7.6px;line-height:9.12px;color:#1c1c1c;letter-spacing:-0.113px;">FB_S420_Venting [FB1420]</span>
<div style="left:260.6px;top:561.77px;width:8.4px;height:8.4px;border-radius:50%;background:radial-gradient(circle at 40% 35%,#6fe070,#2cb43c 60%,#1f9a30);"></div>
<div style="left:15.2px;top:583.45px;width:255px;height:0.9px;background:#f9f9f9;"></div>
<svg style="left:94.05px;top:574.76px" width="10" height="7.2" viewBox="0 0 10 7.2"><rect x="0" y="1.3" width="3" height="1.5" fill="#1a50c8"/><rect x="0" y="4.4" width="3" height="1.5" fill="#1a50c8"/><rect x="7" y="2.8" width="3" height="1.6" fill="#1a50c8"/><rect x="1.9" y="0.3" width="5.8" height="6.6" rx="1.2" fill="#2a86e8"/><rect x="3.6" y="2.3" width="2.4" height="2.4" rx="0.8" fill="#ffffff" opacity="0.45"/></svg>
<span style="left:106.85px;top:573.50px;font-size:7.6px;line-height:9.12px;color:#1c1c1c;letter-spacing:-0.179px;">FB_S425_Open_Cake_Door [FB1425]</span>
<div style="left:260.6px;top:573.66px;width:8.4px;height:8.4px;border-radius:50%;background:radial-gradient(circle at 40% 35%,#6fe070,#2cb43c 60%,#1f9a30);"></div>
<div style="left:15.2px;top:595.34px;width:255px;height:0.9px;background:#f9f9f9;"></div>
<svg style="left:94.05px;top:586.65px" width="10" height="7.2" viewBox="0 0 10 7.2"><rect x="0" y="1.3" width="3" height="1.5" fill="#1a50c8"/><rect x="0" y="4.4" width="3" height="1.5" fill="#1a50c8"/><rect x="7" y="2.8" width="3" height="1.6" fill="#1a50c8"/><rect x="1.9" y="0.3" width="5.8" height="6.6" rx="1.2" fill="#2a86e8"/><rect x="3.6" y="2.3" width="2.4" height="2.4" rx="0.8" fill="#ffffff" opacity="0.45"/></svg>
<span style="left:106.85px;top:585.39px;font-size:7.6px;line-height:9.12px;color:#1c1c1c;letter-spacing:-0.153px;">FB_S430_Cake_Discharge [FB1430]</span>
<div style="left:260.6px;top:585.55px;width:8.4px;height:8.4px;border-radius:50%;background:radial-gradient(circle at 40% 35%,#6fe070,#2cb43c 60%,#1f9a30);"></div>
<div style="left:246px;top:108.1px;width:1px;height:489.19999999999993px;background:#d4d4d4;"></div>
<div style="left:257.5px;top:108.1px;width:0.8px;height:489.19999999999993px;background:#f6f6f6;"></div>
<div style="left:271px;top:108.1px;width:11.5px;height:489.19999999999993px;background:#c2c2c2;"></div>
<div style="left:271.3px;top:108.39999999999999px;width:11px;height:10.5px;background:#e9e9e9;border:1px solid #bdbdbd;box-sizing:border-box;"></div>
<div style="left:271.3px;top:586.5px;width:11px;height:10.5px;background:#e9e9e9;border:1px solid #bdbdbd;box-sizing:border-box;"></div>
<svg style="left:273.6px;top:111.5px" width="6.4" height="4" viewBox="0 0 6.4 4"><path d="M0.5 3.5L3.2 0.8L5.9 3.5" fill="none" stroke="#333" stroke-width="1"/></svg>
<svg style="left:273.6px;top:590px" width="6.4" height="4" viewBox="0 0 6.4 4"><path d="M0.5 0.5L3.2 3.2L5.9 0.5" fill="none" stroke="#333" stroke-width="1"/></svg>
<div style="left:271.3px;top:151px;width:11px;height:136.5px;background:linear-gradient(90deg,#e4e4e4,#f2f2f2 40%,#dedede);border:1px solid #b4b4b4;box-sizing:border-box;"></div>
<div style="left:274.5px;top:218.5px;width:4.5px;height:0.8px;background:#8a8a8a;"></div>
<div style="left:274.5px;top:220.1px;width:4.5px;height:0.8px;background:#8a8a8a;"></div>
<div style="left:274.5px;top:221.7px;width:4.5px;height:0.8px;background:#8a8a8a;"></div>
<div style="left:15.2px;top:597.5px;width:268.0px;height:10.9px;background:#c2c2c2;"></div>
<div style="left:16px;top:597.8px;width:10.5px;height:10px;background:#e9e9e9;border:1px solid #bdbdbd;box-sizing:border-box;"></div>
<div style="left:260px;top:597.8px;width:10.5px;height:10px;background:#e9e9e9;border:1px solid #bdbdbd;box-sizing:border-box;"></div>
<svg style="left:19px;top:599.6px" width="4" height="6.4" viewBox="0 0 4 6.4"><path d="M3.5 0.5L0.8 3.2L3.5 5.9" fill="none" stroke="#333" stroke-width="1"/></svg>
<svg style="left:263.5px;top:599.6px" width="4" height="6.4" viewBox="0 0 4 6.4"><path d="M0.5 0.5L3.2 3.2L0.5 5.9" fill="none" stroke="#333" stroke-width="1"/></svg>
<div style="left:27px;top:597.8px;width:228.5px;height:10px;background:linear-gradient(#f2f2f2,#dedede);border:1px solid #b4b4b4;box-sizing:border-box;"></div>
<div style="left:139.3px;top:600.5px;width:0.8px;height:4.5px;background:#8a8a8a;"></div>
<div style="left:140.8px;top:600.5px;width:0.8px;height:4.5px;background:#8a8a8a;"></div>
<div style="left:142.3px;top:600.5px;width:0.8px;height:4.5px;background:#8a8a8a;"></div>
<div style="left:15.2px;top:608.3px;width:268.0px;height:2.2px;background:#262c44;"></div>
<div style="left:15.2px;top:610.3px;width:268.0px;height:12.4px;background:linear-gradient(#f4f4f4,#d8d8d8);"></div>
<div style="left:15.2px;top:622.7px;width:268.0px;height:2.4px;background:#262c44;"></div>
<div style="left:15.2px;top:625.1px;width:268.0px;height:12.6px;background:linear-gradient(#f4f4f4,#d8d8d8);"></div>
<div style="left:25.5px;top:610.3px;width:0.8px;height:12.4px;background:#b0b0b0;"></div>
<div style="left:25.5px;top:625.1px;width:0.8px;height:12.6px;background:#b0b0b0;"></div>
<svg style="left:18.3px;top:613.3px" width="4.5" height="6.4" viewBox="0 0 4.5 6.4"><path d="M0.7 0.6L3.5 3.2L0.7 5.8" fill="none" stroke="#111" stroke-width="1.3"/></svg>
<svg style="left:18.3px;top:628.3px" width="4.5" height="6.4" viewBox="0 0 4.5 6.4"><path d="M0.7 0.6L3.5 3.2L0.7 5.8" fill="none" stroke="#111" stroke-width="1.3"/></svg>
<span style="left:30.6px;top:611.54px;font-size:8.6px;line-height:10.32px;color:#1a1a1a;font-weight:bold;letter-spacing:-0.099px;">Reference projects</span>
<span style="left:30.6px;top:626.54px;font-size:8.6px;line-height:10.32px;color:#1a1a1a;font-weight:bold;letter-spacing:0.091px;">Details view</span>
<div style="left:284.2px;top:46px;width:733.3px;height:15.2px;background:#2a324e;"></div>
<span style="left:287.8px;top:50.08px;font-size:8.2px;line-height:9.84px;color:#ffffff;font-weight:bold;letter-spacing:0.100px;">...on_Unit_OJ_Program</span>
<span style="left:395.6px;top:50.08px;font-size:8.2px;line-height:9.84px;color:#ffffff;font-weight:bold;letter-spacing:0.094px;">PLC_A601 [CPU 1513-1 PN]</span>
<svg style="left:386.0px;top:51.3px" width="3.4" height="5" viewBox="0 0 3.4 5"><path d="M0.2 0L3.2 2.5L0.2 5z" fill="#fff"/></svg>
<span style="left:520.5px;top:50.08px;font-size:8.2px;line-height:9.84px;color:#ffffff;font-weight:bold;letter-spacing:-0.115px;">Program blocks</span>
<svg style="left:510.9px;top:51.3px" width="3.4" height="5" viewBox="0 0 3.4 5"><path d="M0.2 0L3.2 2.5L0.2 5z" fill="#fff"/></svg>
<span style="left:598.5px;top:50.08px;font-size:8.2px;line-height:9.84px;color:#ffffff;font-weight:bold;letter-spacing:0.281px;">200 Main Operation</span>
<svg style="left:588.9px;top:51.3px" width="3.4" height="5" viewBox="0 0 3.4 5"><path d="M0.2 0L3.2 2.5L0.2 5z" fill="#fff"/></svg>
<span style="left:694.6px;top:50.08px;font-size:8.2px;line-height:9.84px;color:#ffffff;font-weight:bold;letter-spacing:0.258px;">220 Automatic Mode</span>
<svg style="left:685.0px;top:51.3px" width="3.4" height="5" viewBox="0 0 3.4 5"><path d="M0.2 0L3.2 2.5L0.2 5z" fill="#fff"/></svg>
<span style="left:794.6px;top:50.08px;font-size:8.2px;line-height:9.84px;color:#ffffff;font-weight:bold;letter-spacing:0.183px;">230 Steps</span>
<svg style="left:785.0px;top:51.3px" width="3.4" height="5" viewBox="0 0 3.4 5"><path d="M0.2 0L3.2 2.5L0.2 5z" fill="#fff"/></svg>
<span style="left:850.6px;top:50.08px;font-size:8.2px;line-height:9.84px;color:#ffffff;font-weight:bold;letter-spacing:0.254px;">FB_S110_Filling [FB1110]</span>
<svg style="left:841.0px;top:51.3px" width="3.4" height="5" viewBox="0 0 3.4 5"><path d="M0.2 0L3.2 2.5L0.2 5z" fill="#fff"/></svg>
<div style="left:972px;top:56.5px;width:7px;height:1.6px;background:#ffffff;"></div>
<div style="left:983.5px;top:52.5px;width:5.5px;height:5.5px;background:#fff;"></div>
<div style="left:986px;top:50.5px;width:5.5px;height:5.5px;background:transparent;border:1.2px solid #fff;box-sizing:border-box;"></div>
<div style="left:995.5px;top:50.5px;width:7px;height:7.5px;background:#fff;"></div>
<div style="left:995.5px;top:52px;width:7px;height:0.9px;background:#2a324e;"></div>
<span style="left:1004.5px;top:47.80px;font-size:9.5px;line-height:11.40px;color:#ffffff;font-weight:bold;">✕</span>
<div style="left:284.2px;top:61px;width:733.3px;height:2px;background:#f4f4f4;"></div>
<div style="left:284.2px;top:63px;width:733.3px;height:15.5px;background:#cfcfcf;"></div>
<div style="left:284.2px;top:78.2px;width:733.3px;height:0.9px;background:#a8a8a8;"></div>
<div style="left:284.2px;top:79px;width:733.3px;height:16.7px;background:#ececec;"></div>
<div style="left:347.5px;top:80.5px;width:1px;height:14px;background:#cfcfcf;"></div>
<div style="left:365.5px;top:80.5px;width:1px;height:14px;background:#cfcfcf;"></div>
<div style="left:523.5px;top:80.5px;width:1px;height:14px;background:#cfcfcf;"></div>
<div style="left:601.8px;top:80.5px;width:1px;height:14px;background:#cfcfcf;"></div>
<div style="left:650.5px;top:80.5px;width:1px;height:14px;background:#cfcfcf;"></div>
<div style="left:683.3px;top:80.5px;width:1px;height:14px;background:#cfcfcf;"></div>
<div style="left:716.5px;top:80.5px;width:1px;height:14px;background:#cfcfcf;"></div>
<div style="left:284.2px;top:95.8px;width:733.3px;height:11.3px;background:#b2b2b2;"></div>
<span style="left:625px;top:97.14px;font-size:7.6px;line-height:9.12px;color:#ffffff;letter-spacing:0.042px;text-shadow:0 0 0.4px #fff;">Block interface</span>
<div style="left:284.2px;top:107px;width:733.3px;height:4.6px;background:#e6e6e6;"></div>
<div style="left:284.2px;top:107px;width:733.3px;height:0.7px;background:#a6a6a6;"></div>
<div style="left:284.2px;top:110.9px;width:733.3px;height:0.8px;background:#b4b4b4;"></div>
<div style="left:632.5px;top:107.3px;width:14.2px;height:3.8px;background:#f4f4f4;border:0.7px solid #a8a8a8;border-top:none;box-sizing:border-box;"></div>
<div style="left:654.2px;top:107.3px;width:14.5px;height:3.8px;background:#c8c8c8;border:0.7px solid #a0a0a0;border-top:none;box-sizing:border-box;"></div>
<svg style="left:638px;top:108.3px" width="3.6" height="1.8" viewBox="0 0 3.6 1.8"><path d="M0 1.8L1.8 0L3.6 1.8z" fill="#8a8a8a"/></svg>
<svg style="left:659.6px;top:108px" width="3.8" height="2" viewBox="0 0 3.8 2"><path d="M0 0L1.9 2L3.8 0z" fill="#111"/></svg>
<div style="left:284.2px;top:111.6px;width:733.3px;height:24.2px;background:#ebebeb;"></div>
<div style="left:286.0px;top:113px;width:20px;height:20.3px;background:#fafafa;"></div>
<span style="left:286.0px;top:120.00px;width:20px;text-align:center;font-size:5.1px;line-height:6.4px;color:#1c2258;font-weight:bold;">IF...</span>
<div style="left:307.05px;top:113px;width:20px;height:20.3px;background:#fafafa;"></div>
<span style="left:307.05px;top:116.90px;width:20px;text-align:center;font-size:5.1px;line-height:6.4px;color:#1c2258;font-weight:bold;overflow:hidden;">CASE...</span>
<span style="left:307.05px;top:123.50px;width:20px;text-align:center;font-size:5.1px;line-height:6.4px;color:#1c2258;font-weight:bold;overflow:hidden;">OF...</span>
<div style="left:328.1px;top:113px;width:20px;height:20.3px;background:#fafafa;"></div>
<span style="left:328.1px;top:116.90px;width:20px;text-align:center;font-size:5.1px;line-height:6.4px;color:#1c2258;font-weight:bold;overflow:hidden;">FOR...</span>
<span style="left:328.1px;top:123.50px;width:20px;text-align:center;font-size:5.1px;line-height:6.4px;color:#1c2258;font-weight:bold;overflow:hidden;">TO DO...</span>
<div style="left:349.15px;top:113px;width:20px;height:20.3px;background:#fafafa;"></div>
<span style="left:349.15px;top:116.90px;width:20px;text-align:center;font-size:5.1px;line-height:6.4px;color:#1c2258;font-weight:bold;overflow:hidden;">WHILE...</span>
<span style="left:349.15px;top:123.50px;width:20px;text-align:center;font-size:5.1px;line-height:6.4px;color:#1c2258;font-weight:bold;overflow:hidden;">DO...</span>
<div style="left:370.2px;top:113px;width:20px;height:20.3px;background:#fafafa;"></div>
<span style="left:370.2px;top:120.00px;width:20px;text-align:center;font-size:5.1px;line-height:6.4px;color:#1c2258;font-weight:bold;">(*...*)</span>
<div style="left:391.25px;top:113px;width:20px;height:20.3px;background:#fafafa;"></div>
<span style="left:391.25px;top:120.00px;width:20px;text-align:center;font-size:5.1px;line-height:6.4px;color:#1c2258;font-weight:bold;">REGION</span>
<div style="left:284.2px;top:135.6px;width:721.3px;height:473.7px;background:#ffffff;"></div>
<div style="left:284.2px;top:135.6px;width:721.3px;height:12.9px;background:#d8d8d8;"></div>
<svg style="left:287.4px;top:139.9px" width="6.6" height="3.6" viewBox="0 0 6.6 3.6"><path d="M0 0.1h6.6L3.3 3.5z" fill="#111"/></svg>
<span style="left:298.8px;top:136.84px;font-size:8.6px;line-height:10.32px;color:#1a1a1a;font-weight:bold;letter-spacing:-0.103px;">Block title:</span>
<span style="left:348.1px;top:137.60px;font-size:7.5px;line-height:9.00px;color:#1a1a1a;letter-spacing:0.001px;">Filling</span>
<div style="left:292.7px;top:148px;width:0.8px;height:126px;background:#dcdcdc;"></div>
<svg style="left:285.8px;top:153px" width="6.3" height="3.5" viewBox="0 0 6.3 3.5"><path d="M0 0.1h6.3L3.15 3.4z" fill="#14145e"/></svg>
<span style="left:294.9px;top:149.55px;font-size:7.25px;line-height:8.70px;color:#1e1e1e;letter-spacing:0.154px;">The filter vessel F11 will be filled up from the precoat tank 11-B40. The pump 11-P1 is switched on</span>
<span style="left:294.9px;top:158.34px;font-size:7.25px;line-height:8.70px;color:#1e1e1e;letter-spacing:0.191px;">and the corresponding valve(s) are opened. To allow gas to go out of the filter during filling, the</span>
<span style="left:294.9px;top:167.13px;font-size:7.25px;line-height:8.70px;color:#1e1e1e;letter-spacing:0.202px;">vent line is opened. The high-level switch is located at the exact height the filter needs to be filled,</span>
<span style="left:294.9px;top:175.92px;font-size:7.25px;line-height:8.70px;color:#1e1e1e;letter-spacing:0.192px;">i.e., at the same height as the overflow for the vent line. Using the sight glass in the vent line, it is</span>
<span style="left:294.9px;top:184.71px;font-size:7.25px;line-height:8.70px;color:#1e1e1e;letter-spacing:0.189px;">visible when the filter is full.</span>
<span style="left:294.9px;top:202.29px;font-size:7.25px;line-height:8.70px;color:#1e1e1e;letter-spacing:0.143px;">Check: Level switch 11-LS4=dry, in this step 11-LS4 = “dry” will act as interlock on the pump (11-P1)</span>
<span style="left:294.9px;top:219.87px;font-size:7.25px;line-height:8.70px;color:#1e1e1e;letter-spacing:0.200px;">Actions:</span>
<span style="left:294.9px;top:228.66px;font-size:7.25px;line-height:8.70px;color:#1e1e1e;letter-spacing:0.179px;">Vent valve (11-V41), feed valve (11-V11) and bottom valve (11-V2) are open. Start the pump (11-1).</span>
<span style="left:294.9px;top:246.24px;font-size:7.25px;line-height:8.70px;color:#1e1e1e;letter-spacing:0.234px;">Transition condition:</span>
<span style="left:294.9px;top:255.03px;font-size:7.25px;line-height:8.70px;color:#1e1e1e;letter-spacing:0.186px;">As soon as both the low (11-LS1) and high level (11-LS2) are “wet” the program continues to the</span>
<span style="left:294.9px;top:263.82px;font-size:7.25px;line-height:8.70px;color:#1e1e1e;letter-spacing:0.196px;">next step.</span>
<div style="left:284.2px;top:283.8px;width:721.3px;height:12.8px;background:#d8d8d8;"></div>
<svg style="left:288.4px;top:286.80px" width="3.9" height="6.6" viewBox="0 0 3.9 6.6"><path d="M0.2 0L3.8 3.3L0.2 6.6z" fill="#111"/></svg>
<span style="left:309.1px;top:285.24px;font-size:8.6px;line-height:10.32px;color:#1a1a1a;font-weight:bold;letter-spacing:-0.093px;">Network 1:</span>
<span style="left:360.7px;top:286.00px;font-size:7.5px;line-height:9.00px;color:#1a1a1a;letter-spacing:-0.310px;-webkit-text-stroke:0.3px #1a1a1a;">====</span>
<span style="left:380.09999999999997px;top:286.58px;font-size:6.7px;line-height:8.04px;color:#1a1a1a;letter-spacing:-0.334px;">CONTROL</span>
<div style="left:284.2px;top:300.08px;width:721.3px;height:12.8px;background:#d8d8d8;"></div>
<svg style="left:288.4px;top:303.08px" width="3.9" height="6.6" viewBox="0 0 3.9 6.6"><path d="M0.2 0L3.8 3.3L0.2 6.6z" fill="#111"/></svg>
<span style="left:309.1px;top:301.52px;font-size:8.6px;line-height:10.32px;color:#1a1a1a;font-weight:bold;letter-spacing:-0.093px;">Network 2:</span>
<span style="left:360.7px;top:302.28px;font-size:7.5px;line-height:9.00px;color:#1a1a1a;letter-spacing:-0.009px;">Check Low and High Level in Filter</span>
<div style="left:284.2px;top:316.36px;width:721.3px;height:12.8px;background:#d8d8d8;"></div>
<svg style="left:288.4px;top:319.36px" width="3.9" height="6.6" viewBox="0 0 3.9 6.6"><path d="M0.2 0L3.8 3.3L0.2 6.6z" fill="#111"/></svg>
<span style="left:309.1px;top:317.80px;font-size:8.6px;line-height:10.32px;color:#1a1a1a;font-weight:bold;letter-spacing:-0.093px;">Network 3:</span>
<span style="left:360.7px;top:318.56px;font-size:7.5px;line-height:9.00px;color:#1a1a1a;letter-spacing:-0.149px;">Reset First Scan</span>
<div style="left:284.2px;top:332.64000000000004px;width:721.3px;height:12.8px;background:#d8d8d8;"></div>
<svg style="left:288.4px;top:335.64px" width="3.9" height="6.6" viewBox="0 0 3.9 6.6"><path d="M0.2 0L3.8 3.3L0.2 6.6z" fill="#111"/></svg>
<span style="left:309.1px;top:334.08px;font-size:8.6px;line-height:10.32px;color:#1a1a1a;font-weight:bold;letter-spacing:-0.093px;">Network 4:</span>
<span style="left:360.7px;top:334.84px;font-size:7.5px;line-height:9.00px;color:#1a1a1a;letter-spacing:-0.310px;-webkit-text-stroke:0.3px #1a1a1a;">====</span>
<span style="left:380.09999999999997px;top:335.42px;font-size:6.7px;line-height:8.04px;color:#1a1a1a;letter-spacing:-0.293px;">STEP CHANGE</span>
<div style="left:284.2px;top:348.92px;width:721.3px;height:12.8px;background:#d8d8d8;"></div>
<svg style="left:288.4px;top:351.92px" width="3.9" height="6.6" viewBox="0 0 3.9 6.6"><path d="M0.2 0L3.8 3.3L0.2 6.6z" fill="#111"/></svg>
<span style="left:309.1px;top:350.36px;font-size:8.6px;line-height:10.32px;color:#1a1a1a;font-weight:bold;letter-spacing:-0.093px;">Network 5:</span>
<span style="left:360.7px;top:351.12px;font-size:7.5px;line-height:9.00px;color:#1a1a1a;letter-spacing:-0.046px;">Transition 1</span>
<div style="left:284.2px;top:365.2px;width:721.3px;height:12.8px;background:#d8d8d8;"></div>
<svg style="left:288.4px;top:368.20px" width="3.9" height="6.6" viewBox="0 0 3.9 6.6"><path d="M0.2 0L3.8 3.3L0.2 6.6z" fill="#111"/></svg>
<span style="left:309.1px;top:366.64px;font-size:8.6px;line-height:10.32px;color:#1a1a1a;font-weight:bold;letter-spacing:-0.093px;">Network 6:</span>
<span style="left:360.7px;top:367.40px;font-size:7.5px;line-height:9.00px;color:#1a1a1a;letter-spacing:-0.001px;">Transition 2</span>
<div style="left:284.2px;top:381.48px;width:721.3px;height:12.8px;background:#d8d8d8;"></div>
<svg style="left:288.4px;top:384.48px" width="3.9" height="6.6" viewBox="0 0 3.9 6.6"><path d="M0.2 0L3.8 3.3L0.2 6.6z" fill="#111"/></svg>
<span style="left:309.1px;top:382.92px;font-size:8.6px;line-height:10.32px;color:#1a1a1a;font-weight:bold;letter-spacing:-0.093px;">Network 7:</span>
<span style="left:360.7px;top:383.68px;font-size:7.5px;line-height:9.00px;color:#1a1a1a;letter-spacing:-0.001px;">Transition 3</span>
<div style="left:284.2px;top:397.76000000000005px;width:721.3px;height:12.8px;background:#d8d8d8;"></div>
<svg style="left:288.4px;top:400.76px" width="3.9" height="6.6" viewBox="0 0 3.9 6.6"><path d="M0.2 0L3.8 3.3L0.2 6.6z" fill="#111"/></svg>
<span style="left:309.1px;top:399.20px;font-size:8.6px;line-height:10.32px;color:#1a1a1a;font-weight:bold;letter-spacing:-0.093px;">Network 8:</span>
<span style="left:360.7px;top:399.96px;font-size:7.5px;line-height:9.00px;color:#1a1a1a;letter-spacing:-0.001px;">Transition 4</span>
<div style="left:284.2px;top:414.04px;width:721.3px;height:12.8px;background:#d8d8d8;"></div>
<svg style="left:288.4px;top:417.04px" width="3.9" height="6.6" viewBox="0 0 3.9 6.6"><path d="M0.2 0L3.8 3.3L0.2 6.6z" fill="#111"/></svg>
<span style="left:309.1px;top:415.48px;font-size:8.6px;line-height:10.32px;color:#1a1a1a;font-weight:bold;letter-spacing:-0.093px;">Network 9:</span>
<span style="left:360.7px;top:416.24px;font-size:7.5px;line-height:9.00px;color:#1a1a1a;letter-spacing:-0.001px;">Transition 5</span>
<div style="left:284.2px;top:430.32px;width:721.3px;height:12.8px;background:#d8d8d8;"></div>
<svg style="left:288.4px;top:433.32px" width="3.9" height="6.6" viewBox="0 0 3.9 6.6"><path d="M0.2 0L3.8 3.3L0.2 6.6z" fill="#111"/></svg>
<span style="left:309.1px;top:431.76px;font-size:8.6px;line-height:10.32px;color:#1a1a1a;font-weight:bold;letter-spacing:-0.052px;">Network 10:</span>
<span style="left:365.8px;top:432.52px;font-size:7.5px;line-height:9.00px;color:#1a1a1a;letter-spacing:-0.310px;-webkit-text-stroke:0.3px #1a1a1a;">====</span>
<span style="left:385.2px;top:433.10px;font-size:6.7px;line-height:8.04px;color:#1a1a1a;letter-spacing:-0.476px;">OUTPUTS</span>
<div style="left:284.2px;top:446.6px;width:721.3px;height:12.8px;background:#d8d8d8;"></div>
<svg style="left:287.3px;top:450.70px" width="6.2" height="4.2" viewBox="0 0 6.2 4.2"><path d="M0 0.2h6.2L3.1 4z" fill="#2a62d8"/></svg>
<div style="left:296.5px;top:447.90000000000003px;width:11.5px;height:10px;background:#cccccc;"></div>
<div style="left:308.3px;top:447.90000000000003px;width:54.7px;height:10px;background:#3c6fd4;"></div>
<span style="left:309.1px;top:448.04px;font-size:8.6px;line-height:10.32px;color:#ffffff;font-weight:bold;letter-spacing:-0.005px;">Network 11:</span>
<span style="left:365.8px;top:448.80px;font-size:7.5px;line-height:9.00px;color:#1a1a1a;letter-spacing:0.074px;">Automatic Enable</span>
<span style="left:307.9px;top:463.52px;font-size:7.3px;line-height:8.76px;color:#989898;letter-spacing:0.260px;">Comment</span>
<div style="left:296.5px;top:475.9px;width:709.0px;height:1px;background:#d4d8f2;"></div>
<div style="left:305.3px;top:460.5px;width:700.2px;height:14.5px;background:transparent;border:0.8px solid #ececec;border-right:none;box-sizing:border-box;"></div>
<div style="left:297.4px;top:481px;width:11px;height:128.3px;background:#c6c6c6;"></div>
<div style="left:308.4px;top:481px;width:697.1px;height:128.3px;overflow:hidden;background:#fff;">
<div style="left:22.3px;top:0px;width:82.6px;height:128.3px;background:#d3d3d3;"></div>
<span class="m" style="left:0;top:2.40px;width:14px;text-align:right;font-size:7.28px;line-height:9px;color:#6a607a;">1</span>
<span class="m" style="left:22.3px;top:2.40px;font-size:7.28px;line-height:9px;"><b style="font-weight:normal;color:#503a94">"DB_Automatic_Mode"</b><b style="font-weight:normal;color:#5a3c94">.Enable.Mixer_Feed_Tank_20_ON := </b><b style="font-weight:normal;color:#2a78a8">false</b><b style="font-weight:normal;color:#5a3c94">;</b></span>
<span class="m" style="left:0;top:13.03px;width:14px;text-align:right;font-size:7.28px;line-height:9px;color:#6a607a;">2</span>
<span class="m" style="left:22.3px;top:13.03px;font-size:7.28px;line-height:9px;"><b style="font-weight:normal;color:#503a94">"DB_Automatic_Mode"</b><b style="font-weight:normal;color:#5a3c94">.Enable.Mixer_Precoat_Tank_11_ON := </b><b style="font-weight:normal;color:#2a78a8">false</b><b style="font-weight:normal;color:#5a3c94">;</b></span>
<span class="m" style="left:0;top:23.67px;width:14px;text-align:right;font-size:7.28px;line-height:9px;color:#6a607a;">3</span>
<span class="m" style="left:22.3px;top:23.67px;font-size:7.28px;line-height:9px;"><b style="font-weight:normal;color:#503a94">"DB_Automatic_Mode"</b><b style="font-weight:normal;color:#5a3c94">.Enable.Pump_Feed_P1_11_ON := </b><b style="font-weight:normal;color:#2a78a8">TRUE</b><b style="font-weight:normal;color:#5a3c94"> </b><b style="font-weight:normal;color:#1a2ae0">AND</b><b style="font-weight:normal;color:#5a3c94"> </b><b style="font-weight:normal;color:#505050">(NOT </b><b style="font-weight:normal;color:#5a3c94">"DB_Inputs_and_Outputs".Inputs.Digital.Low_Level_Filter_11 </b><b style="font-weight:normal;color:#1a2ae0">OR</b><b style="font-weight:normal;color:#5a3c94"> </b><b style="font-weight:normal;color:#505050">NOT </b><b style="font-weight:normal;color:#5a3c94">"DB_Inputs_and_Outputs".Inputs.Digital.High_Level_Filter_11)</b></span>
<span class="m" style="left:0;top:34.30px;width:14px;text-align:right;font-size:7.28px;line-height:9px;color:#6a607a;">4</span>
<span class="m" style="left:22.3px;top:34.30px;font-size:7.28px;line-height:9px;"><b style="font-weight:normal;color:#503a94">"DB_Automatic_Mode"</b><b style="font-weight:normal;color:#5a3c94">.Enable.Pump_Feed_P2_11_ON := </b><b style="font-weight:normal;color:#2a78a8">false</b><b style="font-weight:normal;color:#5a3c94">;</b></span>
<span class="m" style="left:0;top:44.94px;width:14px;text-align:right;font-size:7.28px;line-height:9px;color:#6a607a;">5</span>
<span class="m" style="left:22.3px;top:44.94px;font-size:7.28px;line-height:9px;"><b style="font-weight:normal;color:#503a94">"DB_Automatic_Mode"</b><b style="font-weight:normal;color:#5a3c94">.Enable.Valve_V1_Feed_11_OPEN := </b><b style="font-weight:normal;color:#2a78a8">false</b><b style="font-weight:normal;color:#5a3c94">;</b></span>
<span class="m" style="left:0;top:55.57px;width:14px;text-align:right;font-size:7.28px;line-height:9px;color:#6a607a;">6</span>
<span class="m" style="left:22.3px;top:55.57px;font-size:7.28px;line-height:9px;"><b style="font-weight:normal;color:#503a94">"DB_Automatic_Mode"</b><b style="font-weight:normal;color:#5a3c94">.Enable.Valve_V2_Bottom_Precoat_11_OPEN := </b><b style="font-weight:normal;color:#2a78a8">TRUE</b><b style="font-weight:normal;color:#5a3c94"> </b><b style="font-weight:normal;color:#1a2ae0">AND</b><b style="font-weight:normal;color:#5a3c94"> </b><b style="font-weight:normal;color:#505050">(NOT </b><b style="font-weight:normal;color:#5a3c94">"DB_Inputs_and_Outputs".Inputs.Digital.Low_Level_Filter_11 </b><b style="font-weight:normal;color:#1a2ae0">OR</b><b style="font-weight:normal;color:#5a3c94"> </b><b style="font-weight:normal;color:#505050">NOT </b><b style="font-weight:normal;color:#5a3c94">"DB_Inputs_and_Outputs".Inputs.Digital.High_Level_Filter_11)</b></span>
<span class="m" style="left:0;top:66.21px;width:14px;text-align:right;font-size:7.28px;line-height:9px;color:#6a607a;">7</span>
<span class="m" style="left:22.3px;top:66.21px;font-size:7.28px;line-height:9px;"><b style="font-weight:normal;color:#503a94">"DB_Automatic_Mode"</b><b style="font-weight:normal;color:#5a3c94">.Enable.Valve_V3_Top_Precoat_11_OPEN := </b><b style="font-weight:normal;color:#2a78a8">false</b><b style="font-weight:normal;color:#5a3c94">;</b></span>
<span class="m" style="left:0;top:76.85px;width:14px;text-align:right;font-size:7.28px;line-height:9px;color:#6a607a;">8</span>
<span class="m" style="left:22.3px;top:76.85px;font-size:7.28px;line-height:9px;"><b style="font-weight:normal;color:#503a94">"DB_Automatic_Mode"</b><b style="font-weight:normal;color:#5a3c94">.Enable.Valve_V11_Feed_Filter_11_OPEN := </b><b style="font-weight:normal;color:#2a78a8">TRUE</b><b style="font-weight:normal;color:#5a3c94"> </b><b style="font-weight:normal;color:#1a2ae0">AND</b><b style="font-weight:normal;color:#5a3c94"> </b><b style="font-weight:normal;color:#505050">(NOT </b><b style="font-weight:normal;color:#5a3c94">"DB_Inputs_and_Outputs".Inputs.Digital.Low_Level_Filter_11 </b><b style="font-weight:normal;color:#1a2ae0">OR</b><b style="font-weight:normal;color:#5a3c94"> </b><b style="font-weight:normal;color:#505050">NOT </b><b style="font-weight:normal;color:#5a3c94">"DB_Inputs_and_Outputs".Inputs.Digital.High_Level_Filter_11)</b></span>
<span class="m" style="left:0;top:87.48px;width:14px;text-align:right;font-size:7.28px;line-height:9px;color:#6a607a;">9</span>
<span class="m" style="left:22.3px;top:87.48px;font-size:7.28px;line-height:9px;"><b style="font-weight:normal;color:#503a94">"DB_Automatic_Mode"</b><b style="font-weight:normal;color:#5a3c94">.Enable.Valve_V12_Drain_11_OPEN := </b><b style="font-weight:normal;color:#2a78a8">false</b><b style="font-weight:normal;color:#5a3c94">;</b></span>
<span class="m" style="left:0;top:98.12px;width:14px;text-align:right;font-size:7.28px;line-height:9px;color:#6a607a;">10</span>
<span class="m" style="left:22.3px;top:98.12px;font-size:7.28px;line-height:9px;"><b style="font-weight:normal;color:#503a94">"DB_Automatic_Mode"</b><b style="font-weight:normal;color:#5a3c94">.Enable.Valve_V21_Fitrate_11_OPEN := </b><b style="font-weight:normal;color:#2a78a8">false</b><b style="font-weight:normal;color:#5a3c94">;</b></span>
<span class="m" style="left:0;top:108.75px;width:14px;text-align:right;font-size:7.28px;line-height:9px;color:#6a607a;">11</span>
<span class="m" style="left:22.3px;top:108.75px;font-size:7.28px;line-height:9px;"><b style="font-weight:normal;color:#503a94">"DB_Automatic_Mode"</b><b style="font-weight:normal;color:#5a3c94">.Enable.Valve_V22_Circulation_11_OPEN := </b><b style="font-weight:normal;color:#2a78a8">false</b><b style="font-weight:normal;color:#5a3c94">;</b></span>
<span class="m" style="left:0;top:119.38px;width:14px;text-align:right;font-size:7.28px;line-height:9px;color:#6a607a;">12</span>
<span class="m" style="left:22.3px;top:119.38px;font-size:7.28px;line-height:9px;"><b style="font-weight:normal;color:#503a94">"DB_Automatic_Mode"</b><b style="font-weight:normal;color:#5a3c94">.Enable.Valve_V22A_Restricted_Circ_11_OPEN := </b><b style="font-weight:normal;color:#2a78a8">false</b><b style="font-weight:normal;color:#5a3c94">;</b></span>
</div>
<div style="left:1005.5px;top:135.6px;width:11.5px;height:473.1px;background:#c2c2c2;"></div>
<div style="left:1005.8px;top:135.8px;width:11px;height:10.5px;background:#e9e9e9;border:1px solid #bdbdbd;box-sizing:border-box;"></div>
<div style="left:1005.8px;top:598px;width:11px;height:10.5px;background:#e9e9e9;border:1px solid #bdbdbd;box-sizing:border-box;"></div>
<svg style="left:1008.1px;top:139.2px" width="6.4" height="4" viewBox="0 0 6.4 4"><path d="M0.5 3.5L3.2 0.8L5.9 3.5" fill="none" stroke="#333" stroke-width="1"/></svg>
<svg style="left:1008.1px;top:601.5px" width="6.4" height="4" viewBox="0 0 6.4 4"><path d="M0.5 0.5L3.2 3.2L5.9 0.5" fill="none" stroke="#333" stroke-width="1"/></svg>
<div style="left:1005.8px;top:146px;width:11px;height:347px;background:linear-gradient(90deg,#e4e4e4,#f2f2f2 40%,#dedede);border:1px solid #b4b4b4;box-sizing:border-box;"></div>
<div style="left:1009.0px;top:319.3px;width:4.5px;height:0.8px;background:#8a8a8a;"></div>
<div style="left:1009.0px;top:320.90000000000003px;width:4.5px;height:0.8px;background:#8a8a8a;"></div>
<div style="left:1009.0px;top:322.5px;width:4.5px;height:0.8px;background:#8a8a8a;"></div>
<div style="left:284.2px;top:608.7px;width:733.3px;height:11.9px;background:#c2c2c2;"></div>
<div style="left:285px;top:609.3px;width:10.5px;height:11px;background:#e9e9e9;border:1px solid #bdbdbd;box-sizing:border-box;"></div>
<svg style="left:288px;top:611.7px" width="4" height="6.4" viewBox="0 0 4 6.4"><path d="M3.5 0.5L0.8 3.2L3.5 5.9" fill="none" stroke="#333" stroke-width="1"/></svg>
<div style="left:296px;top:609.3px;width:403px;height:11px;background:linear-gradient(#f2f2f2,#dedede);border:1px solid #b4b4b4;box-sizing:border-box;"></div>
<div style="left:496.3px;top:612.6px;width:0.8px;height:4.5px;background:#8a8a8a;"></div>
<div style="left:497.8px;top:612.6px;width:0.8px;height:4.5px;background:#8a8a8a;"></div>
<div style="left:499.3px;top:612.6px;width:0.8px;height:4.5px;background:#8a8a8a;"></div>
<div style="left:829.8px;top:609.3px;width:10.5px;height:11px;background:#e9e9e9;border:1px solid #bdbdbd;box-sizing:border-box;"></div>
<svg style="left:833px;top:611.7px" width="4" height="6.4" viewBox="0 0 4 6.4"><path d="M0.5 0.5L3.2 3.2L0.5 5.9" fill="none" stroke="#333" stroke-width="1"/></svg>
<div style="left:843.5px;top:609.2px;width:98.5px;height:11.3px;background:#ffffff;border:1px solid #a8a8a8;box-sizing:border-box;"></div>
<span style="left:847.1px;top:611.42px;font-size:7.3px;line-height:8.76px;color:#222;letter-spacing:-0.224px;">100%</span>
<div style="left:931.5px;top:610.2px;width:9.7px;height:9.3px;background:#e4e4e4;border:1px solid #a8a8a8;box-sizing:border-box;"></div>
<svg style="left:934px;top:613.6px" width="5" height="3" viewBox="0 0 5 3"><path d="M0 0h5L2.5 3z" fill="#111"/></svg>
<div style="left:953px;top:613.4px;width:41px;height:0.9px;background:#7a7a7a;"></div>
<div style="left:953.0px;top:616.5px;width:0.7px;height:1.8px;background:#8a8a8a;"></div>
<div style="left:956.15px;top:616.5px;width:0.7px;height:1.8px;background:#8a8a8a;"></div>
<div style="left:959.3px;top:616.5px;width:0.7px;height:1.8px;background:#8a8a8a;"></div>
<div style="left:962.45px;top:616.5px;width:0.7px;height:1.8px;background:#8a8a8a;"></div>
<div style="left:965.6px;top:616.5px;width:0.7px;height:1.8px;background:#8a8a8a;"></div>
<div style="left:968.75px;top:616.5px;width:0.7px;height:1.8px;background:#8a8a8a;"></div>
<div style="left:971.9px;top:616.5px;width:0.7px;height:1.8px;background:#8a8a8a;"></div>
<div style="left:975.05px;top:616.5px;width:0.7px;height:1.8px;background:#8a8a8a;"></div>
<div style="left:978.2px;top:616.5px;width:0.7px;height:1.8px;background:#8a8a8a;"></div>
<div style="left:981.35px;top:616.5px;width:0.7px;height:1.8px;background:#8a8a8a;"></div>
<div style="left:984.5px;top:616.5px;width:0.7px;height:1.8px;background:#8a8a8a;"></div>
<div style="left:987.65px;top:616.5px;width:0.7px;height:1.8px;background:#8a8a8a;"></div>
<div style="left:990.8px;top:616.5px;width:0.7px;height:1.8px;background:#8a8a8a;"></div>
<div style="left:993.95px;top:616.5px;width:0.7px;height:1.8px;background:#8a8a8a;"></div>
<div style="left:966.3px;top:610.8px;width:2.8px;height:6px;background:#dcdcdc;border:0.8px solid #888;box-sizing:border-box;"></div>
<div style="left:284.2px;top:620.5px;width:733.3px;height:2.4px;background:#262c44;"></div>
<div style="left:284.2px;top:622.9px;width:733.3px;height:15px;background:#b9b9b9;"></div>
<div style="left:777.5px;top:624.5px;width:69px;height:13.5px;background:linear-gradient(#e6e6e6,#cfcfcf);border:1px solid #9a9a9a;border-bottom:none;box-sizing:border-box;"></div>
<span style="left:792.4px;top:626.54px;font-size:8.6px;line-height:10.32px;color:#5a5a5a;letter-spacing:0.059px;">Properties</span>
<div style="left:848.5px;top:623.6px;width:44.5px;height:14.5px;background:linear-gradient(#fbfbfb,#ececec);border:1px solid #9a9a9a;border-bottom:none;box-sizing:border-box;"></div>
<span style="left:864.4px;top:626.44px;font-size:8.6px;line-height:10.32px;color:#1a1a1a;font-weight:bold;letter-spacing:0.117px;">Info</span>
<div style="left:895px;top:624.5px;width:75.5px;height:13.5px;background:linear-gradient(#e6e6e6,#cfcfcf);border:1px solid #9a9a9a;border-bottom:none;box-sizing:border-box;"></div>
<span style="left:910.5px;top:626.54px;font-size:8.6px;line-height:10.32px;color:#5a5a5a;letter-spacing:0.168px;">Diagnostics</span>
<div style="left:780.5px;top:627px;width:8px;height:7.5px;background:#f2f2f8;border:0.8px solid #8890b8;box-sizing:border-box;"></div>
<svg style="left:782px;top:627.5px" width="7" height="7" viewBox="0 0 7 7"><circle cx="2.8" cy="2.8" r="1.9" fill="none" stroke="#3a4a9a" stroke-width="1"/><path d="M4.2 4.2L6.5 6.5" stroke="#3a4a9a" stroke-width="1.2"/></svg>
<div style="left:851.5px;top:627px;width:8px;height:7.5px;background:#f2f2f8;border:0.8px solid #8890b8;box-sizing:border-box;"></div>
<span style="left:852.3px;top:626.90px;font-size:6.5px;line-height:7.80px;color:#1a2a9a;font-weight:bold;">i</span>
<svg style="left:855px;top:629px" width="5.5" height="6" viewBox="0 0 5.5 6"><path d="M1 0v4h3.5M3 2.5L4.8 4L3 5.6" fill="none" stroke="#1a2a9a" stroke-width="1"/></svg>
<div style="left:898.5px;top:627px;width:7.5px;height:7.5px;background:#f2f2f8;border:0.8px solid #8890b8;box-sizing:border-box;"></div>
<svg style="left:899.5px;top:628px" width="6" height="6" viewBox="0 0 6 6"><path d="M1 0.5v2.2a1.3 1.3 0 0 0 2.6 0V0.5M2.3 4v1.2h2.5V3" fill="none" stroke="#2a3aa8" stroke-width="0.9"/></svg>
<div style="left:984px;top:629.5px;width:4.8px;height:4.5px;background:#e8e8e8;"></div>
<div style="left:985.8px;top:627.8px;width:4.8px;height:4.5px;background:transparent;border:1px solid #e8e8e8;box-sizing:border-box;"></div>
<div style="left:995px;top:628.5px;width:5.5px;height:6px;background:#c8c8c8;border:0.8px solid #d8d8d8;box-sizing:border-box;"></div>
<svg style="left:1005.5px;top:628.5px" width="7" height="5" viewBox="0 0 7 5"><path d="M0 5L3.5 0L7 5z" fill="#fff"/></svg>
<div style="left:1018.6px;top:46px;width:165.69999999999993px;height:15px;background:#adadad;"></div>
<span style="left:1021.9px;top:49.04px;font-size:8.6px;line-height:10.32px;color:#f4f4f4;font-weight:bold;letter-spacing:-0.090px;">Instructions</span>
<div style="left:1151.5px;top:52px;width:4.8px;height:4.5px;background:#f4f4f4;"></div>
<div style="left:1153.3px;top:50.3px;width:4.8px;height:4.5px;background:transparent;border:1px solid #f4f4f4;box-sizing:border-box;"></div>
<div style="left:1162.3px;top:50px;width:6.6px;height:7px;background:#c6c6c6;border:1px solid #e0e0e0;box-sizing:border-box;"></div>
<div style="left:1164.6px;top:50px;width:0.9px;height:7px;background:#e0e0e0;"></div>
<svg style="left:1175.5px;top:49.5px" width="5" height="8" viewBox="0 0 5 8"><path d="M0.3 0L4.8 4L0.3 8z" fill="#fff"/></svg>
<div style="left:1018.6px;top:61px;width:165.69999999999993px;height:17px;background:linear-gradient(#d8d8d8,#ffffff 30%,#f4f4f4 60%,#dcdcdc);"></div>
<span style="left:1021.9px;top:66.24px;font-size:8.6px;line-height:10.32px;color:#1a1a1a;font-weight:bold;letter-spacing:-0.195px;">Options</span>
<div style="left:1018.6px;top:77.8px;width:165.69999999999993px;height:1.2px;background:#9a9a9a;"></div>
<div style="left:1018.6px;top:79px;width:165.69999999999993px;height:16.7px;background:#ececec;"></div>
<div style="left:1022.4px;top:82.5px;width:75px;height:10.6px;background:#ffffff;border:1px solid #a8a8a8;box-sizing:border-box;"></div>
<div style="left:1131.3px;top:80.5px;width:1px;height:14px;background:#d0d0d0;"></div>
<svg style="left:1102.5px;top:84px" width="11" height="8" viewBox="0 0 11 8"><g fill="#16207a"><rect x="0.3" y="2.6" width="1.4" height="4.4"/><rect x="0.3" y="0.6" width="1.4" height="1.3"/><rect x="5.3" y="2.6" width="1.4" height="4.4"/><rect x="5.3" y="0.6" width="1.4" height="1.3"/><rect x="2.8" y="0.5" width="1.3" height="5"/><path d="M1.9 4.4h3.1L3.45 7.2z"/><rect x="8" y="0.5" width="1.3" height="5"/><path d="M7.1 4.4h3.1L8.65 7.2z"/></g></svg>
<svg style="left:1117.5px;top:84px" width="11" height="8" viewBox="0 0 11 8"><g fill="#16207a"><rect x="0.3" y="2.6" width="1.4" height="4.4"/><rect x="0.3" y="0.6" width="1.4" height="1.3"/><rect x="5.3" y="2.6" width="1.4" height="4.4"/><rect x="5.3" y="0.6" width="1.4" height="1.3"/><rect x="2.8" y="2.2" width="1.3" height="5"/><path d="M1.9 3.3h3.1L3.45 0.5z"/><rect x="8" y="2.2" width="1.3" height="5"/><path d="M7.1 3.3h3.1L8.65 0.5z"/></g></svg>
<svg style="left:1135.2px;top:82px" width="3" height="4.4" viewBox="0 0 3 4.4"><path d="M0 0L3 2.2L0 4.4z" fill="#111"/></svg>
<div style="left:1155.5px;top:83px;width:9.5px;height:7.8px;background:#eef0fa;border:1px solid #9aa2d8;border-bottom:2px solid #8e96cc;box-sizing:border-box;"></div>
<div style="left:1170.5px;top:83px;width:9.5px;height:7.8px;background:#c8cce8;border:1px solid #9aa2d8;border-bottom:2px solid #8e96cc;box-sizing:border-box;"></div>
<div style="left:1018.6px;top:95.7px;width:165.69999999999993px;height:1.6px;background:#9a9a9a;"></div>
<div style="left:1018.6px;top:97.3px;width:165.69999999999993px;height:12.7px;background:linear-gradient(#f6f6f6,#ececec 45%,#d2d2d2);"></div>
<div style="left:1031px;top:97.3px;width:0.9px;height:12.7px;background:#a8a8a8;"></div>
<svg style="left:1022.6px;top:100.45px" width="4.5" height="6.4" viewBox="0 0 4.5 6.4"><path d="M0.7 0.6L3.5 3.2L0.7 5.8" fill="none" stroke="#111" stroke-width="1.3"/></svg>
<span style="left:1034.6px;top:98.69px;font-size:8.6px;line-height:10.32px;color:#1a1a1a;font-weight:bold;letter-spacing:-0.202px;">Favorites</span>
<div style="left:1018.6px;top:110px;width:165.69999999999993px;height:2.3px;background:#8c8c8c;"></div>
<div style="left:1018.6px;top:112.3px;width:165.69999999999993px;height:12.5px;background:linear-gradient(#f6f6f6,#ececec 45%,#d2d2d2);"></div>
<div style="left:1031px;top:112.3px;width:0.9px;height:12.5px;background:#a8a8a8;"></div>
<svg style="left:1021.8px;top:116.35px" width="6.4" height="4.5" viewBox="0 0 6.4 4.5"><path d="M0.6 0.7L3.2 3.5L5.8 0.7" fill="none" stroke="#111" stroke-width="1.3"/></svg>
<span style="left:1034.6px;top:113.59px;font-size:8.6px;line-height:10.32px;color:#1a1a1a;font-weight:bold;letter-spacing:-0.235px;">Basic instructions</span>
<div style="left:1018.6px;top:124.8px;width:165.69999999999993px;height:1.5px;background:#8c8c8c;"></div>
<div style="left:1018.6px;top:126.3px;width:165.69999999999993px;height:11px;background:linear-gradient(#f4f6fa,#dde2ee 55%,#eef0f6);"></div>
<div style="left:1132.4px;top:126.3px;width:0.9px;height:11px;background:#c0c4d0;"></div>
<span style="left:1020.8px;top:127.56px;font-size:7.4px;line-height:8.88px;color:#222;letter-spacing:-0.206px;">Name</span>
<span style="left:1134.3px;top:127.56px;font-size:7.4px;line-height:8.88px;color:#222;letter-spacing:0.043px;">Description</span>
<div style="left:1018.6px;top:137.3px;width:165.69999999999993px;height:1.2px;background:#ffffff;"></div>
<div style="left:1018.6px;top:138.5px;width:165.69999999999993px;height:428.5px;background:#f0f0f0;"></div>
<div style="left:1018.6px;top:149.6px;width:165.69999999999993px;height:0.9px;background:#fbfbfb;"></div>
<div style="left:1018.6px;top:161.5px;width:165.69999999999993px;height:0.9px;background:#fbfbfb;"></div>
<div style="left:1018.6px;top:173.39999999999998px;width:165.69999999999993px;height:0.9px;background:#fbfbfb;"></div>
<div style="left:1018.6px;top:185.29999999999998px;width:165.69999999999993px;height:0.9px;background:#fbfbfb;"></div>
<div style="left:1018.6px;top:197.2px;width:165.69999999999993px;height:0.9px;background:#fbfbfb;"></div>
<div style="left:1018.6px;top:209.1px;width:165.69999999999993px;height:0.9px;background:#fbfbfb;"></div>
<div style="left:1018.6px;top:221.0px;width:165.69999999999993px;height:0.9px;background:#fbfbfb;"></div>
<div style="left:1018.6px;top:232.89999999999998px;width:165.69999999999993px;height:0.9px;background:#fbfbfb;"></div>
<div style="left:1018.6px;top:244.8px;width:165.69999999999993px;height:0.9px;background:#fbfbfb;"></div>
<div style="left:1018.6px;top:256.7px;width:165.69999999999993px;height:0.9px;background:#fbfbfb;"></div>
<div style="left:1018.6px;top:268.59999999999997px;width:165.69999999999993px;height:0.9px;background:#fbfbfb;"></div>
<div style="left:1018.6px;top:280.5px;width:165.69999999999993px;height:0.9px;background:#fbfbfb;"></div>
<div style="left:1018.6px;top:292.40000000000003px;width:165.69999999999993px;height:0.9px;background:#fbfbfb;"></div>
<div style="left:1018.6px;top:304.3px;width:165.69999999999993px;height:0.9px;background:#fbfbfb;"></div>
<div style="left:1018.6px;top:316.2px;width:165.69999999999993px;height:0.9px;background:#fbfbfb;"></div>
<div style="left:1018.6px;top:328.09999999999997px;width:165.69999999999993px;height:0.9px;background:#fbfbfb;"></div>
<div style="left:1018.6px;top:340.0px;width:165.69999999999993px;height:0.9px;background:#fbfbfb;"></div>
<div style="left:1018.6px;top:351.90000000000003px;width:165.69999999999993px;height:0.9px;background:#fbfbfb;"></div>
<div style="left:1018.6px;top:363.8px;width:165.69999999999993px;height:0.9px;background:#fbfbfb;"></div>
<div style="left:1018.6px;top:375.7px;width:165.69999999999993px;height:0.9px;background:#fbfbfb;"></div>
<div style="left:1018.6px;top:387.59999999999997px;width:165.69999999999993px;height:0.9px;background:#fbfbfb;"></div>
<div style="left:1018.6px;top:399.5px;width:165.69999999999993px;height:0.9px;background:#fbfbfb;"></div>
<div style="left:1018.6px;top:411.4px;width:165.69999999999993px;height:0.9px;background:#fbfbfb;"></div>
<div style="left:1018.6px;top:423.3px;width:165.69999999999993px;height:0.9px;background:#fbfbfb;"></div>
<div style="left:1018.6px;top:435.2px;width:165.69999999999993px;height:0.9px;background:#fbfbfb;"></div>
<div style="left:1018.6px;top:447.1px;width:165.69999999999993px;height:0.9px;background:#fbfbfb;"></div>
<div style="left:1018.6px;top:459.0px;width:165.69999999999993px;height:0.9px;background:#fbfbfb;"></div>
<div style="left:1018.6px;top:470.9px;width:165.69999999999993px;height:0.9px;background:#fbfbfb;"></div>
<div style="left:1018.6px;top:482.8px;width:165.69999999999993px;height:0.9px;background:#fbfbfb;"></div>
<div style="left:1018.6px;top:494.7px;width:165.69999999999993px;height:0.9px;background:#fbfbfb;"></div>
<div style="left:1018.6px;top:506.6px;width:165.69999999999993px;height:0.9px;background:#fbfbfb;"></div>
<div style="left:1018.6px;top:518.5px;width:165.69999999999993px;height:0.9px;background:#fbfbfb;"></div>
<div style="left:1018.6px;top:530.4000000000001px;width:165.69999999999993px;height:0.9px;background:#fbfbfb;"></div>
<div style="left:1018.6px;top:542.3000000000001px;width:165.69999999999993px;height:0.9px;background:#fbfbfb;"></div>
<div style="left:1018.6px;top:554.2px;width:165.69999999999993px;height:0.9px;background:#fbfbfb;"></div>
<div style="left:1018.6px;top:566.1000000000001px;width:165.69999999999993px;height:0.9px;background:#fbfbfb;"></div>
<div style="left:1018.6px;top:578.0px;width:165.69999999999993px;height:0.9px;background:#fbfbfb;"></div>
<div style="left:1132.4px;top:138.5px;width:0.9px;height:428.5px;background:#fbfbfb;"></div>
<div style="left:1018.6px;top:138.5px;width:165.69999999999993px;height:11.1px;background:#eef0f3;"></div>
<div style="left:1133.3px;top:138.5px;width:51.0px;height:11.1px;background:#dfe3ea;"></div>
<svg style="left:1023.3px;top:140.90px" width="4" height="5.2" viewBox="0 0 4 5.2"><path d="M0.4 0L3.6 2.6L0.4 5.2z" fill="#111"/></svg>
<svg style="left:1030px;top:138.90px" width="10" height="9.4" viewBox="0 0 10 9.4"><defs><linearGradient id="fg" x1="0" y1="0" x2="0.6" y2="1"><stop offset="0" stop-color="#fef4c8"/><stop offset="1" stop-color="#f2c850"/></linearGradient></defs><path d="M0.4 1.2h3.2l0.9 1h5v6.7H0.4z" fill="url(#fg)" stroke="#d6a22a" stroke-width="0.8"/></svg>
<span style="left:1031px;top:140.90px;width:8.6px;text-align:center;font-size:5.0px;line-height:7px;color:#2a1c08;font-weight:bold;letter-spacing:-0.4px;font-family:'DejaVu Sans',sans-serif;">┤│</span>
<span style="left:1043.0px;top:139.24px;font-size:7.6px;line-height:9.12px;color:#1c1c1c;letter-spacing:0.044px;">Bit logic operations</span>
<svg style="left:1023.3px;top:152.80px" width="4" height="5.2" viewBox="0 0 4 5.2"><path d="M0.4 0L3.6 2.6L0.4 5.2z" fill="#111"/></svg>
<svg style="left:1030px;top:150.80px" width="10" height="9.4" viewBox="0 0 10 9.4"><defs><linearGradient id="fg" x1="0" y1="0" x2="0.6" y2="1"><stop offset="0" stop-color="#fef4c8"/><stop offset="1" stop-color="#f2c850"/></linearGradient></defs><path d="M0.4 1.2h3.2l0.9 1h5v6.7H0.4z" fill="url(#fg)" stroke="#d6a22a" stroke-width="0.8"/></svg>
<span style="left:1031px;top:152.80px;width:8.6px;text-align:center;font-size:6.6px;line-height:7px;color:#2a1c08;font-weight:bold;letter-spacing:-0.4px;font-family:'DejaVu Sans',sans-serif;">◷</span>
<span style="left:1043.0px;top:151.14px;font-size:7.6px;line-height:9.12px;color:#1c1c1c;letter-spacing:-0.000px;">Timer operations</span>
<svg style="left:1023.3px;top:164.70px" width="4" height="5.2" viewBox="0 0 4 5.2"><path d="M0.4 0L3.6 2.6L0.4 5.2z" fill="#111"/></svg>
<svg style="left:1030px;top:162.70px" width="10" height="9.4" viewBox="0 0 10 9.4"><defs><linearGradient id="fg" x1="0" y1="0" x2="0.6" y2="1"><stop offset="0" stop-color="#fef4c8"/><stop offset="1" stop-color="#f2c850"/></linearGradient></defs><path d="M0.4 1.2h3.2l0.9 1h5v6.7H0.4z" fill="url(#fg)" stroke="#d6a22a" stroke-width="0.8"/></svg>
<span style="left:1031px;top:164.70px;width:8.6px;text-align:center;font-size:5.0px;line-height:7px;color:#2a1c08;font-weight:bold;letter-spacing:-0.4px;font-family:'DejaVu Sans',sans-serif;">+1</span>
<span style="left:1043.0px;top:163.04px;font-size:7.6px;line-height:9.12px;color:#1c1c1c;letter-spacing:0.024px;">Counter operations</span>
<svg style="left:1023.3px;top:176.60px" width="4" height="5.2" viewBox="0 0 4 5.2"><path d="M0.4 0L3.6 2.6L0.4 5.2z" fill="#111"/></svg>
<svg style="left:1030px;top:174.60px" width="10" height="9.4" viewBox="0 0 10 9.4"><defs><linearGradient id="fg" x1="0" y1="0" x2="0.6" y2="1"><stop offset="0" stop-color="#fef4c8"/><stop offset="1" stop-color="#f2c850"/></linearGradient></defs><path d="M0.4 1.2h3.2l0.9 1h5v6.7H0.4z" fill="url(#fg)" stroke="#d6a22a" stroke-width="0.8"/></svg>
<span style="left:1031px;top:176.60px;width:8.6px;text-align:center;font-size:6.6px;line-height:7px;color:#2a1c08;font-weight:bold;letter-spacing:-0.4px;font-family:'DejaVu Sans',sans-serif;">&lt;</span>
<span style="left:1043.0px;top:174.94px;font-size:7.6px;line-height:9.12px;color:#1c1c1c;letter-spacing:0.051px;">Comparator operations</span>
<svg style="left:1023.3px;top:188.50px" width="4" height="5.2" viewBox="0 0 4 5.2"><path d="M0.4 0L3.6 2.6L0.4 5.2z" fill="#111"/></svg>
<svg style="left:1030px;top:186.50px" width="10" height="9.4" viewBox="0 0 10 9.4"><defs><linearGradient id="fg" x1="0" y1="0" x2="0.6" y2="1"><stop offset="0" stop-color="#fef4c8"/><stop offset="1" stop-color="#f2c850"/></linearGradient></defs><path d="M0.4 1.2h3.2l0.9 1h5v6.7H0.4z" fill="url(#fg)" stroke="#d6a22a" stroke-width="0.8"/></svg>
<span style="left:1031px;top:188.50px;width:8.6px;text-align:center;font-size:6.6px;line-height:7px;color:#2a1c08;font-weight:bold;letter-spacing:-0.4px;font-family:'DejaVu Sans',sans-serif;">±</span>
<span style="left:1043.0px;top:186.84px;font-size:7.6px;line-height:9.12px;color:#1c1c1c;letter-spacing:0.001px;">Math functions</span>
<svg style="left:1023.3px;top:200.40px" width="4" height="5.2" viewBox="0 0 4 5.2"><path d="M0.4 0L3.6 2.6L0.4 5.2z" fill="#111"/></svg>
<svg style="left:1030px;top:198.40px" width="10" height="9.4" viewBox="0 0 10 9.4"><defs><linearGradient id="fg" x1="0" y1="0" x2="0.6" y2="1"><stop offset="0" stop-color="#fef4c8"/><stop offset="1" stop-color="#f2c850"/></linearGradient></defs><path d="M0.4 1.2h3.2l0.9 1h5v6.7H0.4z" fill="url(#fg)" stroke="#d6a22a" stroke-width="0.8"/></svg>
<span style="left:1031px;top:200.40px;width:8.6px;text-align:center;font-size:6.6px;line-height:7px;color:#2a1c08;font-weight:bold;letter-spacing:-0.4px;font-family:'DejaVu Sans',sans-serif;">⤳</span>
<span style="left:1043.0px;top:198.74px;font-size:7.6px;line-height:9.12px;color:#1c1c1c;letter-spacing:-0.004px;">Move operations</span>
<svg style="left:1023.3px;top:212.30px" width="4" height="5.2" viewBox="0 0 4 5.2"><path d="M0.4 0L3.6 2.6L0.4 5.2z" fill="#111"/></svg>
<svg style="left:1030px;top:210.30px" width="10" height="9.4" viewBox="0 0 10 9.4"><defs><linearGradient id="fg" x1="0" y1="0" x2="0.6" y2="1"><stop offset="0" stop-color="#fef4c8"/><stop offset="1" stop-color="#f2c850"/></linearGradient></defs><path d="M0.4 1.2h3.2l0.9 1h5v6.7H0.4z" fill="url(#fg)" stroke="#d6a22a" stroke-width="0.8"/></svg>
<span style="left:1031px;top:212.30px;width:8.6px;text-align:center;font-size:6.6px;line-height:7px;color:#2a1c08;font-weight:bold;letter-spacing:-0.4px;font-family:'DejaVu Sans',sans-serif;">↯</span>
<span style="left:1043.0px;top:210.64px;font-size:7.6px;line-height:9.12px;color:#1c1c1c;letter-spacing:0.016px;">Conversion operations</span>
<svg style="left:1023.3px;top:224.20px" width="4" height="5.2" viewBox="0 0 4 5.2"><path d="M0.4 0L3.6 2.6L0.4 5.2z" fill="#111"/></svg>
<svg style="left:1030px;top:222.20px" width="10" height="9.4" viewBox="0 0 10 9.4"><defs><linearGradient id="fg" x1="0" y1="0" x2="0.6" y2="1"><stop offset="0" stop-color="#fef4c8"/><stop offset="1" stop-color="#f2c850"/></linearGradient></defs><path d="M0.4 1.2h3.2l0.9 1h5v6.7H0.4z" fill="url(#fg)" stroke="#d6a22a" stroke-width="0.8"/></svg>
<span style="left:1031px;top:224.20px;width:8.6px;text-align:center;font-size:6.6px;line-height:7px;color:#2a1c08;font-weight:bold;letter-spacing:-0.4px;font-family:'DejaVu Sans',sans-serif;">⇄</span>
<span style="left:1043.0px;top:222.54px;font-size:7.6px;line-height:9.12px;color:#1c1c1c;letter-spacing:0.013px;">Program control operati...</span>
<svg style="left:1023.3px;top:236.10px" width="4" height="5.2" viewBox="0 0 4 5.2"><path d="M0.4 0L3.6 2.6L0.4 5.2z" fill="#111"/></svg>
<svg style="left:1030px;top:234.10px" width="10" height="9.4" viewBox="0 0 10 9.4"><defs><linearGradient id="fg" x1="0" y1="0" x2="0.6" y2="1"><stop offset="0" stop-color="#fef4c8"/><stop offset="1" stop-color="#f2c850"/></linearGradient></defs><path d="M0.4 1.2h3.2l0.9 1h5v6.7H0.4z" fill="url(#fg)" stroke="#d6a22a" stroke-width="0.8"/></svg>
<span style="left:1031px;top:236.10px;width:8.6px;text-align:center;font-size:5.0px;line-height:7px;color:#2a1c08;font-weight:bold;letter-spacing:-0.4px;font-family:'DejaVu Sans',sans-serif;">08</span>
<span style="left:1043.0px;top:234.44px;font-size:7.6px;line-height:9.12px;color:#1c1c1c;letter-spacing:-0.006px;">Word logic operations</span>
<svg style="left:1023.3px;top:248.00px" width="4" height="5.2" viewBox="0 0 4 5.2"><path d="M0.4 0L3.6 2.6L0.4 5.2z" fill="#111"/></svg>
<svg style="left:1030px;top:246.00px" width="10" height="9.4" viewBox="0 0 10 9.4"><defs><linearGradient id="fg" x1="0" y1="0" x2="0.6" y2="1"><stop offset="0" stop-color="#fef4c8"/><stop offset="1" stop-color="#f2c850"/></linearGradient></defs><path d="M0.4 1.2h3.2l0.9 1h5v6.7H0.4z" fill="url(#fg)" stroke="#d6a22a" stroke-width="0.8"/></svg>
<span style="left:1031px;top:248.00px;width:8.6px;text-align:center;font-size:6.6px;line-height:7px;color:#2a1c08;font-weight:bold;letter-spacing:-0.4px;font-family:'DejaVu Sans',sans-serif;">↔</span>
<span style="left:1043.0px;top:246.34px;font-size:7.6px;line-height:9.12px;color:#1c1c1c;letter-spacing:0.039px;">Shift and rotate</span>
<svg style="left:1023.3px;top:259.90px" width="4" height="5.2" viewBox="0 0 4 5.2"><path d="M0.4 0L3.6 2.6L0.4 5.2z" fill="#111"/></svg>
<svg style="left:1030px;top:257.90px" width="10" height="9.4" viewBox="0 0 10 9.4"><defs><linearGradient id="fg" x1="0" y1="0" x2="0.6" y2="1"><stop offset="0" stop-color="#fef4c8"/><stop offset="1" stop-color="#f2c850"/></linearGradient></defs><path d="M0.4 1.2h3.2l0.9 1h5v6.7H0.4z" fill="url(#fg)" stroke="#d6a22a" stroke-width="0.8"/></svg>
<span style="left:1031px;top:259.90px;width:8.6px;text-align:center;font-size:5.0px;line-height:7px;color:#2a1c08;font-weight:bold;letter-spacing:-0.4px;font-family:'DejaVu Sans',sans-serif;">ETC</span>
<span style="left:1043.0px;top:258.24px;font-size:7.6px;line-height:9.12px;color:#1c1c1c;letter-spacing:-0.040px;">Legacy</span>
<div style="left:1018.6px;top:567px;width:165.69999999999993px;height:11.3px;background:#c2c2c2;"></div>
<div style="left:1020px;top:567.5px;width:10.5px;height:10.2px;background:#e9e9e9;border:1px solid #bdbdbd;box-sizing:border-box;"></div>
<svg style="left:1023px;top:569.4px" width="4" height="6.4" viewBox="0 0 4 6.4"><path d="M3.5 0.5L0.8 3.2L3.5 5.9" fill="none" stroke="#333" stroke-width="1"/></svg>
<div style="left:1031px;top:567.5px;width:127px;height:10.2px;background:linear-gradient(#f2f2f2,#dedede);border:1px solid #b4b4b4;box-sizing:border-box;"></div>
<div style="left:1093.3px;top:570.3px;width:0.8px;height:4.5px;background:#8a8a8a;"></div>
<div style="left:1094.8px;top:570.3px;width:0.8px;height:4.5px;background:#8a8a8a;"></div>
<div style="left:1096.3px;top:570.3px;width:0.8px;height:4.5px;background:#8a8a8a;"></div>
<div style="left:1173.5px;top:567.5px;width:10.5px;height:10.2px;background:#e9e9e9;border:1px solid #bdbdbd;box-sizing:border-box;"></div>
<svg style="left:1177px;top:569.4px" width="4" height="6.4" viewBox="0 0 4 6.4"><path d="M0.5 0.5L3.2 3.2L0.5 5.9" fill="none" stroke="#333" stroke-width="1"/></svg>
<div style="left:1018.6px;top:578.3000000000001px;width:165.69999999999993px;height:2.3px;background:#8c8c8c;"></div>
<div style="left:1018.6px;top:580.6px;width:165.69999999999993px;height:12.7px;background:linear-gradient(#f6f6f6,#ececec 45%,#d2d2d2);"></div>
<div style="left:1031px;top:580.6px;width:0.9px;height:12.7px;background:#a8a8a8;"></div>
<svg style="left:1022.6px;top:583.75px" width="4.5" height="6.4" viewBox="0 0 4.5 6.4"><path d="M0.7 0.6L3.5 3.2L0.7 5.8" fill="none" stroke="#111" stroke-width="1.3"/></svg>
<span style="left:1034.6px;top:581.99px;font-size:8.6px;line-height:10.32px;color:#1a1a1a;font-weight:bold;letter-spacing:-0.177px;">Extended instructions</span>
<div style="left:1018.6px;top:593.3000000000001px;width:165.69999999999993px;height:2.3px;background:#8c8c8c;"></div>
<div style="left:1018.6px;top:595.6px;width:165.69999999999993px;height:12.7px;background:linear-gradient(#f6f6f6,#ececec 45%,#d2d2d2);"></div>
<div style="left:1031px;top:595.6px;width:0.9px;height:12.7px;background:#a8a8a8;"></div>
<svg style="left:1022.6px;top:598.75px" width="4.5" height="6.4" viewBox="0 0 4.5 6.4"><path d="M0.7 0.6L3.5 3.2L0.7 5.8" fill="none" stroke="#111" stroke-width="1.3"/></svg>
<span style="left:1034.6px;top:596.99px;font-size:8.6px;line-height:10.32px;color:#1a1a1a;font-weight:bold;letter-spacing:-0.144px;">Technology</span>
<div style="left:1018.6px;top:608.3000000000001px;width:165.69999999999993px;height:2.3px;background:#8c8c8c;"></div>
<div style="left:1018.6px;top:610.6px;width:165.69999999999993px;height:12.7px;background:linear-gradient(#f6f6f6,#ececec 45%,#d2d2d2);"></div>
<div style="left:1031px;top:610.6px;width:0.9px;height:12.7px;background:#a8a8a8;"></div>
<svg style="left:1022.6px;top:613.75px" width="4.5" height="6.4" viewBox="0 0 4.5 6.4"><path d="M0.7 0.6L3.5 3.2L0.7 5.8" fill="none" stroke="#111" stroke-width="1.3"/></svg>
<span style="left:1034.6px;top:611.99px;font-size:8.6px;line-height:10.32px;color:#1a1a1a;font-weight:bold;letter-spacing:-0.195px;">Communication</span>
<div style="left:1018.6px;top:623.3000000000001px;width:165.69999999999993px;height:2.3px;background:#8c8c8c;"></div>
<div style="left:1018.6px;top:625.6px;width:165.69999999999993px;height:12.7px;background:linear-gradient(#f6f6f6,#ececec 45%,#d2d2d2);"></div>
<div style="left:1031px;top:625.6px;width:0.9px;height:12.7px;background:#a8a8a8;"></div>
<svg style="left:1022.6px;top:628.75px" width="4.5" height="6.4" viewBox="0 0 4.5 6.4"><path d="M0.7 0.6L3.5 3.2L0.7 5.8" fill="none" stroke="#111" stroke-width="1.3"/></svg>
<span style="left:1034.6px;top:626.99px;font-size:8.6px;line-height:10.32px;color:#1a1a1a;font-weight:bold;letter-spacing:-0.083px;">Optional packages</span>
<div style="left:1184.3px;top:46px;width:1.2px;height:592px;background:#7a7a7a;"></div>
<div style="left:1185.5px;top:46px;width:14.5px;height:592px;background:#b3b3b3;"></div>
<div style="left:1185.5px;top:65.5px;width:12px;height:76.0px;background:linear-gradient(90deg,#f2f2f2,#e8e8e8);border:1px solid #8e8e8e;border-left:none;box-sizing:border-box;border-radius:0 2px 2px 0;"></div>
<span style="font-size:8.6px;line-height:10px;color:#1a1a1a;transform-origin:0 0;font-weight:bold;letter-spacing:-0.190px;left:1196.30px;top:80.80px;transform:rotate(90deg);">Instructions</span>
<div style="left:1185.5px;top:144px;width:12px;height:57.5px;background:linear-gradient(90deg,#d2d2d2,#c2c2c2);border:1px solid #8e8e8e;border-left:none;box-sizing:border-box;border-radius:0 2px 2px 0;"></div>
<span style="font-size:8.6px;line-height:10px;color:#4a4a4a;transform-origin:0 0;letter-spacing:0.444px;left:1196.30px;top:159.30px;transform:rotate(90deg);">Testing</span>
<div style="left:1185.5px;top:203.9px;width:12px;height:50.79999999999998px;background:linear-gradient(90deg,#d2d2d2,#c2c2c2);border:1px solid #8e8e8e;border-left:none;box-sizing:border-box;border-radius:0 2px 2px 0;"></div>
<span style="font-size:8.6px;line-height:10px;color:#4a4a4a;transform-origin:0 0;letter-spacing:0.133px;left:1196.30px;top:219.30px;transform:rotate(90deg);">Tasks</span>
<div style="left:1185.5px;top:255.6px;width:12px;height:63.00000000000003px;background:linear-gradient(90deg,#d2d2d2,#c2c2c2);border:1px solid #8e8e8e;border-left:none;box-sizing:border-box;border-radius:0 2px 2px 0;"></div>
<span style="font-size:8.6px;line-height:10px;color:#4a4a4a;transform-origin:0 0;letter-spacing:0.204px;left:1196.30px;top:271.50px;transform:rotate(90deg);">Libraries</span>
<div style="left:1185.5px;top:321.2px;width:12px;height:50.5px;background:linear-gradient(90deg,#d2d2d2,#c2c2c2);border:1px solid #8e8e8e;border-left:none;box-sizing:border-box;border-radius:0 2px 2px 0;"></div>
<span style="font-size:8.6px;line-height:10px;color:#4a4a4a;transform-origin:0 0;letter-spacing:0.110px;left:1196.30px;top:328.50px;transform:rotate(90deg);">Add-ins</span>
<div style="left:1186.6px;top:67.2px;width:9.2px;height:9px;background:#e4e6f6;border:0.8px solid #a8aed8;box-sizing:border-box;"></div>
<div style="left:1190.8px;top:67.2px;width:0.9px;height:9px;background:#a8aed8;"></div>
<div style="left:1186.6px;top:71.3px;width:9.2px;height:0.9px;background:#a8aed8;"></div>
<div style="left:1187.5px;top:146.6px;width:7.5px;height:8px;background:#f2f2f8;border:0.8px solid #8890b8;box-sizing:border-box;"></div>
<svg style="left:1188.5px;top:147.8px" width="6" height="6" viewBox="0 0 6 6"><path d="M1 0.5v2.2a1.3 1.3 0 0 0 2.6 0V0.5M2.3 4v1.2h2.5V3" fill="none" stroke="#2a3aa8" stroke-width="0.9"/></svg>
<div style="left:1187px;top:207px;width:7.5px;height:8px;background:#f4f0e0;border:0.8px solid #a89858;box-sizing:border-box;"></div>
<svg style="left:1189.5px;top:207px" width="7" height="6" viewBox="0 0 7 6"><path d="M0.5 3L2.5 5L6.5 0.5" fill="none" stroke="#2a9a30" stroke-width="1.4"/></svg>
<div style="left:1186.6px;top:258.5px;width:8.6px;height:7.2px;background:#ffffff;border:1px solid #3a4ab8;box-sizing:border-box;"></div>
<div style="left:1190.5px;top:258.5px;width:0.9px;height:7.2px;background:#3a4ab8;"></div>
<div style="left:0px;top:638px;width:1200px;height:16px;background:#1b1b1b;"></div>
<svg style="left:22.5px;top:641.5px" width="4.5" height="8" viewBox="0 0 4.5 8"><path d="M4.5 0L0 4L4.5 8z" fill="#fff"/></svg>
<span style="left:33.3px;top:641.84px;font-size:8.6px;line-height:10.32px;color:#f4f4f4;font-weight:bold;letter-spacing:0.033px;">Portal view</span>
<div style="left:113.0px;top:640.5px;width:70.3px;height:12.7px;background:linear-gradient(#cdcdcd,#c2c2c2);border:0.8px solid #e8e8e8;box-sizing:border-box;"></div>
<div style="left:115.5px;top:642.6px;width:9px;height:8.6px;background:#f4f4fa;border:0.9px solid #3a4a9a;box-sizing:border-box;"></div>
<div style="left:117.3px;top:645.1px;width:1.8px;height:1.5px;background:#e0902a;"></div>
<div style="left:117.3px;top:647.9px;width:1.8px;height:1.5px;background:#3a5ad0;"></div>
<div style="left:120.3px;top:645.1px;width:1.8px;height:1.5px;background:#3a5ad0;"></div>
<div style="left:120.3px;top:647.9px;width:1.8px;height:1.5px;background:#e0902a;"></div>
<span style="left:127.9px;top:642.60px;font-size:7.5px;line-height:9.00px;color:#222;letter-spacing:-0.109px;">Overview</span>
<div style="left:185.4px;top:640.5px;width:70.3px;height:12.7px;background:linear-gradient(#cdcdcd,#c2c2c2);border:0.8px solid #e8e8e8;box-sizing:border-box;"></div>
<div style="left:190.70000000000002px;top:642.6px;width:3.2px;height:3px;background:#3a6ad0;"></div>
<div style="left:187.70000000000002px;top:647.6999999999999px;width:3px;height:3px;background:#3a9a8a;"></div>
<div style="left:193.70000000000002px;top:647.6999999999999px;width:3px;height:3px;background:#3a9a8a;"></div>
<div style="left:188.9px;top:646.1px;width:7px;height:0.8px;background:#3a5a9a;"></div>
<div style="left:192.0px;top:645.4px;width:0.8px;height:5px;background:#3a5a9a;"></div>
<div style="left:190.70000000000002px;top:647.6999999999999px;width:3px;height:3px;background:#3a9a8a;"></div>
<span style="left:200.3px;top:642.60px;font-size:7.5px;line-height:9.00px;color:#222;letter-spacing:-0.211px;">Devices &amp; ne...</span>
<div style="left:257.8px;top:640.5px;width:70.3px;height:12.7px;background:linear-gradient(#cdcdcd,#c2c2c2);border:0.8px solid #e8e8e8;box-sizing:border-box;"></div>
<div style="left:260.3px;top:642.9px;width:5.5px;height:4.5px;background:#e8e8f8;border:0.9px solid #6a3ab0;box-sizing:border-box;"></div>
<div style="left:262.8px;top:646.4px;width:6px;height:4px;background:#9a4ad0;"></div>
<span style="left:272.7px;top:642.60px;font-size:7.5px;line-height:9.00px;color:#222;letter-spacing:-0.122px;">Inputs and O...</span>
<div style="left:330.20000000000005px;top:640.5px;width:70.3px;height:12.7px;background:linear-gradient(#cdcdcd,#c2c2c2);border:0.8px solid #e8e8e8;box-sizing:border-box;"></div>
<svg style="left:332.40000000000003px;top:643.90px" width="10" height="7.2" viewBox="0 0 10 7.2"><rect x="0" y="1.3" width="3" height="1.5" fill="#1a3fa8"/><rect x="0" y="4.4" width="3" height="1.5" fill="#1a3fa8"/><rect x="7" y="2.8" width="3" height="1.6" fill="#1a3fa8"/><rect x="1.9" y="0.3" width="5.8" height="6.6" rx="1.2" fill="#2f8ee8"/><rect x="3.6" y="2.3" width="2.4" height="2.4" rx="0.8" fill="#ffffff" opacity="0.45"/></svg>
<span style="left:345.1px;top:642.60px;font-size:7.5px;line-height:9.00px;color:#222;letter-spacing:-0.219px;">FB_Faults (F...</span>
<div style="left:402.6px;top:640.5px;width:70.3px;height:12.7px;background:linear-gradient(#cdcdcd,#c2c2c2);border:0.8px solid #e8e8e8;box-sizing:border-box;"></div>
<svg style="left:404.8px;top:643.90px" width="10" height="7.2" viewBox="0 0 10 7.2"><rect x="0" y="1.3" width="3" height="1.5" fill="#1a3fa8"/><rect x="0" y="4.4" width="3" height="1.5" fill="#1a3fa8"/><rect x="7" y="2.8" width="3" height="1.6" fill="#1a3fa8"/><rect x="1.9" y="0.3" width="5.8" height="6.6" rx="1.2" fill="#2f8ee8"/><rect x="3.6" y="2.3" width="2.4" height="2.4" rx="0.8" fill="#ffffff" opacity="0.45"/></svg>
<span style="left:417.5px;top:642.60px;font-size:7.5px;line-height:9.00px;color:#222;letter-spacing:-0.569px;">FB_SFC_Seq...</span>
<div style="left:475.0px;top:640.5px;width:70.3px;height:12.7px;background:#ffffff;"></div>
<svg style="left:477.2px;top:643.90px" width="10" height="7.2" viewBox="0 0 10 7.2"><rect x="0" y="1.3" width="3" height="1.5" fill="#1a3fa8"/><rect x="0" y="4.4" width="3" height="1.5" fill="#1a3fa8"/><rect x="7" y="2.8" width="3" height="1.6" fill="#1a3fa8"/><rect x="1.9" y="0.3" width="5.8" height="6.6" rx="1.2" fill="#2f8ee8"/><rect x="3.6" y="2.3" width="2.4" height="2.4" rx="0.8" fill="#ffffff" opacity="0.45"/></svg>
<span style="left:489.9px;top:642.60px;font-size:7.5px;line-height:9.00px;color:#222;letter-spacing:0.034px;">FB_S110_Filli...</span>
<div style="left:547.4000000000001px;top:640.5px;width:70.3px;height:12.7px;background:linear-gradient(#cdcdcd,#c2c2c2);border:0.8px solid #e8e8e8;box-sizing:border-box;"></div>
<svg style="left:550.9000000000001px;top:642.70px" width="7" height="9" viewBox="0 0 7 9"><defs><linearGradient id="dg" x1="0" x2="1"><stop offset="0" stop-color="#3a4ae8"/><stop offset="0.35" stop-color="#7484f8"/><stop offset="1" stop-color="#2230d4"/></linearGradient></defs><rect x="0.3" y="1.2" width="6.4" height="6.6" fill="url(#dg)"/><ellipse cx="3.5" cy="7.7" rx="3.2" ry="1.2" fill="#2c3ad8"/><ellipse cx="3.5" cy="1.4" rx="3.2" ry="1.2" fill="#7c8af8"/></svg>
<span style="left:562.3000000000001px;top:642.60px;font-size:7.5px;line-height:9.00px;color:#222;letter-spacing:-0.141px;">DB_Simulati...</span>
<div style="left:619.8000000000001px;top:640.5px;width:70.3px;height:12.7px;background:linear-gradient(#cdcdcd,#c2c2c2);border:0.8px solid #e8e8e8;box-sizing:border-box;"></div>
<div style="left:622.6px;top:642.9px;width:7.5px;height:7.5px;background:#e8ecfa;border:0.9px solid #4a5ab0;box-sizing:border-box;"></div>
<span style="left:634.7px;top:642.60px;font-size:7.5px;line-height:9.00px;color:#222;letter-spacing:-0.215px;">100_Main_S...</span>
<div style="left:692.2px;top:640.5px;width:70.3px;height:12.7px;background:linear-gradient(#cdcdcd,#c2c2c2);border:0.8px solid #e8e8e8;box-sizing:border-box;"></div>
<div style="left:694.7px;top:642.9px;width:5.5px;height:5px;background:#f4f6ff;border:0.9px solid #3a5ad0;box-sizing:border-box;"></div>
<div style="left:696.7px;top:645.4px;width:5.5px;height:5px;background:#f4f6ff;border:0.9px solid #3a5ad0;box-sizing:border-box;"></div>
<span style="left:707.1px;top:642.60px;font-size:7.5px;line-height:9.00px;color:#222;letter-spacing:-0.048px;">Template_H...</span>
<div style="left:764.6px;top:640.5px;width:70.3px;height:12.7px;background:linear-gradient(#cdcdcd,#c2c2c2);border:0.8px solid #e8e8e8;box-sizing:border-box;"></div>
<div style="left:767.4px;top:642.9px;width:7.5px;height:7.5px;background:#e8ecfa;border:0.9px solid #4a5ab0;box-sizing:border-box;"></div>
<span style="left:779.5px;top:642.60px;font-size:7.5px;line-height:9.00px;color:#222;letter-spacing:-0.026px;">210_Filter_11</span>
<div style="left:837.0px;top:640.5px;width:70.3px;height:12.7px;background:linear-gradient(#cdcdcd,#c2c2c2);border:0.8px solid #e8e8e8;box-sizing:border-box;"></div>
<div style="left:839.8px;top:642.9px;width:7.5px;height:7.5px;background:#e8ecfa;border:0.9px solid #4a5ab0;box-sizing:border-box;"></div>
<span style="left:851.9px;top:642.60px;font-size:7.5px;line-height:9.00px;color:#222;letter-spacing:0.008px;">500_Alarms</span>
<div style="left:978.2px;top:641.3px;width:11.7px;height:11.5px;background:#e4e6ee;border:0.8px solid #8a90a8;box-sizing:border-box;"></div>
<div style="left:980px;top:643px;width:5px;height:1px;background:#8a90b0;"></div>
<div style="left:980px;top:645px;width:5px;height:1px;background:#8a90b0;"></div>
<div style="left:980px;top:647px;width:5px;height:1px;background:#8a90b0;"></div>
<div style="left:980px;top:649.3px;width:8.2px;height:2.2px;background:#2a3a8a;"></div>
<div style="left:985.8px;top:643px;width:2.6px;height:4.5px;background:#2a3a8a;"></div>
<div style="left:993.3px;top:639.5px;width:1px;height:13px;background:#555;"></div>
<svg style="left:996px;top:643px" width="9.5" height="9.5" viewBox="0 0 9.5 9.5"><circle cx="4.75" cy="4.75" r="4.5" fill="#1a4ae0"/><path d="M2.2 4.8L4.2 6.8L7.3 2.8" fill="none" stroke="#fff" stroke-width="1.4"/></svg>
<span style="left:1008.7px;top:644.22px;font-size:7.3px;line-height:8.76px;color:#f0f0f0;letter-spacing:-0.058px;">Connected to PLC_A601, via address IP...</span>
<div style="left:1158.7px;top:643.7px;width:17.3px;height:7.9px;background:linear-gradient(90deg,#f86a10,#d85808 14%,#f86a10 15%,#d85808 28%,#f86a10 29%,#d85808 42%,#f86a10 43%,#e86008 57%,#f4f4fa 58%,#e8e8f8 69%,#f86a10 71%,#e05a08 84%,#f86a10 85%,#f06410);"></div>
<div style="left:1188.8px;top:642.5px;width:10px;height:10.2px;background:#e4e8ec;border:0.8px solid #b8c0c8;box-sizing:border-box;"></div>
<div style="left:1190.3px;top:643.8px;width:7px;height:4.8px;background:#3ac860;"></div>
<div style="left:1192px;top:644.8px;width:3.5px;height:2.8px;background:#2a4a9a;"></div>
<div style="left:1190.3px;top:649.8px;width:7px;height:1.6px;background:#3a4060;"></div>
<div style="left:9.5px;top:33.7px;width:7px;height:9px;background:#f4f6ff;border:0.8px solid #8a96d8;box-sizing:border-box;"></div>
<svg style="left:12.5px;top:31.700000000000003px" width="6.5" height="6.5" viewBox="0 0 7 7"><path d="M3.5 0L4.3 2.7L7 3.5L4.3 4.3L3.5 7L2.7 4.3L0 3.5L2.7 2.7z" fill="#f0d020"/></svg>
<svg style="left:23px;top:32.7px" width="11" height="10" viewBox="0 0 11 10"><path d="M0.4 2.2h3.3l0.9 1h4.6v6H0.4z" fill="#f4d470" stroke="#cf9c20" stroke-width="0.8"/><path d="M5 1.5h2.7V0l2.8 2.5L7.7 5V3.5H5z" fill="#2e9a3c"/></svg>
<svg style="left:37px;top:33.0px" width="9.5" height="9.5" viewBox="0 0 9.5 9.5"><rect x="0.3" y="0.3" width="8.9" height="8.9" rx="0.8" fill="#1e50d8"/><rect x="2" y="0.3" width="5.5" height="3.8" fill="#dfe8ff"/><rect x="2.4" y="6" width="4.7" height="3.2" fill="#f4f4f4"/><rect x="3" y="6.6" width="1.4" height="2" fill="#1e50d8"/></svg>
<svg style="left:100px;top:32.7px" width="10.5" height="10" viewBox="0 0 10.5 10"><rect x="2.6" y="0.5" width="5.3" height="5" fill="#7a7a8a" stroke="#d8d8f0" stroke-width="0.8"/><rect x="0.4" y="5" width="9.7" height="4.3" rx="1.6" fill="#3a5ae0"/><rect x="1.2" y="6.2" width="8" height="1" fill="#8aa0f8"/></svg>
<svg style="left:118px;top:32.7px" width="9" height="10.5" viewBox="0 0 9 10.5"><path d="M1.5 0.3L6 7M7.5 0.3L3 7" stroke="#2a56c8" stroke-width="1.3" fill="none"/><circle cx="2.3" cy="8.4" r="1.5" fill="none" stroke="#2a56c8" stroke-width="1.1"/><circle cx="6.7" cy="8.4" r="1.5" fill="none" stroke="#2a56c8" stroke-width="1.1"/></svg>
<div style="left:132.5px;top:33.2px;width:6px;height:7.5px;background:#eef0fc;border:0.8px solid #5a6ac0;box-sizing:border-box;"></div>
<div style="left:135.5px;top:35.2px;width:6px;height:7.5px;background:#c8d0f4;border:0.8px solid #3a4ab0;box-sizing:border-box;"></div>
<div style="left:137px;top:37.2px;width:3px;height:0.8px;background:#3a4ab0;"></div>
<div style="left:137px;top:39.2px;width:3px;height:0.8px;background:#3a4ab0;"></div>
<div style="left:148px;top:33.2px;width:7.5px;height:9px;background:#e4e4e4;border:0.8px solid #9a9a9a;box-sizing:border-box;"></div>
<div style="left:151.5px;top:36.2px;width:6px;height:6.5px;background:#f4f4f4;border:0.8px solid #8a8a8a;box-sizing:border-box;"></div>
<div style="left:153px;top:38.2px;width:3px;height:0.8px;background:#8a8a8a;"></div>
<div style="left:153px;top:40.0px;width:3px;height:0.8px;background:#8a8a8a;"></div>
<svg style="left:163.3px;top:34.0px" width="8.5" height="8.5" viewBox="0 0 8.5 8.5"><path d="M0.8 0.8L7.7 7.7M7.7 0.8L0.8 7.7" stroke="#14145a" stroke-width="1.8"/></svg>
<svg style="left:180px;top:33.7px" width="10" height="9" viewBox="0 0 10 9"><path d="M1 1v3.6h3.6" fill="none" stroke="#6a6a6a" stroke-width="1.4"/><path d="M1.5 4.2C3.2 1.5 7.6 1.6 8.4 4.6C8.8 6.6 7.4 8 5.6 8.2" fill="none" stroke="#6a6a6a" stroke-width="1.4"/></svg>
<span style="left:191.8px;top:33.80px;font-size:7.5px;line-height:9.00px;color:#6a6a6a;font-weight:bold;">±</span>
<svg style="left:202px;top:33.7px" width="10" height="9" viewBox="0 0 10 9"><path d="M9 1v3.6H5.4" fill="none" stroke="#7a7a7a" stroke-width="1.4"/><path d="M8.5 4.2C6.8 1.5 2.4 1.6 1.6 4.6C1.2 6.6 2.6 8 4.4 8.2" fill="none" stroke="#7a7a7a" stroke-width="1.4"/></svg>
<span style="left:213.8px;top:33.80px;font-size:7.5px;line-height:9.00px;color:#7a7a7a;font-weight:bold;">±</span>
<div style="left:227.5px;top:33.2px;width:9.5px;height:9.5px;background:#dfe6f8;border:0.8px solid #6a7ab8;box-sizing:border-box;"></div>
<div style="left:229px;top:34.7px;width:3.5px;height:3px;background:#3a5ad0;"></div>
<div style="left:231.5px;top:38.2px;width:4px;height:3px;background:#3a5ad0;"></div>
<div style="left:242.5px;top:33.2px;width:9.5px;height:9.5px;background:#1a2a6a;border-radius:1px;border:1px solid #2a8ac8;box-sizing:border-box;"></div>
<div style="left:244px;top:34.7px;width:2px;height:6.5px;background:#f4f4f4;"></div>
<div style="left:247.5px;top:34.7px;width:2px;height:4px;background:#f4f4f4;"></div>
<svg style="left:246px;top:38.2px" width="5" height="3.5" viewBox="0 0 5 3.5"><path d="M0 0h5L2.5 3.5z" fill="#f4f4f4"/></svg>
<div style="left:257.5px;top:33.2px;width:9.5px;height:9.5px;background:#8a8a8a;border-radius:1px;border:1px solid #5a5a5a;box-sizing:border-box;"></div>
<div style="left:259px;top:35.7px;width:2px;height:5.5px;background:#f4f4f4;"></div>
<svg style="left:261px;top:34.2px" width="5" height="7.5" viewBox="0 0 5 7.5"><path d="M2.5 0L5 3.5H3.5V7.5H1.5V3.5H0z" fill="#f4f4f4"/></svg>
<div style="left:272.5px;top:33.2px;width:8.5px;height:7px;background:#bdbdbd;border:0.8px solid #7a7a7a;box-sizing:border-box;"></div>
<div style="left:271.5px;top:40.7px;width:10.5px;height:2px;background:#8a8a8a;"></div>
<div style="left:287.5px;top:33.2px;width:8.5px;height:7.5px;background:#6a6a6a;border:0.8px solid #4a4a4a;box-sizing:border-box;"></div>
<div style="left:289px;top:34.7px;width:4px;height:4px;background:#d8d8d8;"></div>
<span style="left:291.8px;top:38.36px;font-size:4.4px;line-height:5.28px;color:#2a2a2a;font-weight:bold;letter-spacing:-0.3px;">RT</span>
<svg style="left:305px;top:32.7px" width="10" height="10.5" viewBox="0 0 10 10.5"><path d="M1 9.5L4.5 6M3.5 4L7.5 0.8L9.3 2.6L6 6.5z" fill="#9a9a9a" stroke="#8a8a8a" stroke-width="0.9"/></svg>
<svg style="left:354.5px;top:32.7px" width="11" height="10.5" viewBox="0 0 11 10.5"><path d="M1 9.5L4 6.5" stroke="#2a3ab0" stroke-width="1.5"/><path d="M3 5L6 2.3L8.6 5L5.6 7.6z" fill="#3a5ae0" stroke="#1a2a9a" stroke-width="0.8"/><path d="M7 1.5L9.8 0.5M8 3L10.6 2.8M9 4.8L10.6 5.6" stroke="#1a2a9a" stroke-width="0.9"/></svg>
<svg style="left:411px;top:32.7px" width="11" height="10.5" viewBox="0 0 11 10.5"><circle cx="3.5" cy="2" r="1.6" fill="#2a8ad0"/><path d="M0.8 10L3.5 4L6.2 10z" fill="#3a9ad8" stroke="#1a5aa8" stroke-width="0.8"/></svg>
<span style="left:417.5px;top:35.20px;font-size:7.5px;line-height:9.00px;color:#14145a;font-weight:bold;">?</span>
<div style="left:426.5px;top:33.7px;width:9.5px;height:9px;background:#9a9a9a;border:0.8px solid #7a7a7a;box-sizing:border-box;"></div>
<div style="left:428px;top:35.2px;width:3px;height:6px;background:#e4e4e4;"></div>
<div style="left:432px;top:35.2px;width:2.5px;height:3px;background:#e4e4e4;"></div>
<div style="left:441.5px;top:33.7px;width:9.5px;height:9px;background:#3a8a9a;border:0.8px solid #2a5a6a;box-sizing:border-box;"></div>
<div style="left:443px;top:35.2px;width:3px;height:6px;background:#e4f0f4;"></div>
<div style="left:447.3px;top:38.7px;width:3px;height:3px;background:#e82020;"></div>
<div style="left:459.5px;top:33.7px;width:8.5px;height:7.5px;background:#f4f6ff;border:0.8px solid #7a86c8;box-sizing:border-box;"></div>
<svg style="left:460.5px;top:34.7px" width="9" height="8" viewBox="0 0 9 8"><path d="M1 1L7.5 6.5M7.5 1L1 6.5" stroke="#14147a" stroke-width="1.5"/></svg>
<div style="left:477.5px;top:33.2px;width:9.5px;height:9.5px;background:#f8f9ff;border:1px solid #8a9ae0;box-sizing:border-box;"></div>
<div style="left:477.5px;top:37.5px;width:9.5px;height:1.4px;background:#8a9ae0;"></div>
<div style="left:492.5px;top:33.2px;width:9.5px;height:9.5px;background:#f8f9ff;border:1px solid #8a9ae0;box-sizing:border-box;"></div>
<div style="left:496.6px;top:33.2px;width:1.4px;height:9.5px;background:#8a9ae0;"></div>
<div style="left:590.5px;top:33.2px;width:5.5px;height:6px;background:#dfe4f8;border:0.8px solid #7a88c8;box-sizing:border-box;"></div>
<div style="left:592.5px;top:36.7px;width:3px;height:6px;background:#1a2a7a;border-radius:1px;"></div>
<div style="left:596.5px;top:36.7px;width:3px;height:6px;background:#1a2a7a;border-radius:1px;"></div>
<div style="left:593.5px;top:35.2px;width:1.6px;height:2px;background:#1a2a7a;"></div>
<div style="left:597px;top:35.2px;width:1.6px;height:2px;background:#1a2a7a;"></div>
<div style="left:595px;top:38.2px;width:2px;height:1.5px;background:#1a2a7a;"></div>
<svg style="left:288.5px;top:87.2px" width="10" height="5.5" viewBox="0 0 10 5.5"><g fill="#1a2ae0"><rect x="0" y="0" width="1.3" height="5.5"/><rect x="8.7" y="0" width="1.3" height="5.5"/><path d="M1.6 2.75L4.6 0.4V5.1z"/><path d="M8.4 2.75L5.4 0.4V5.1z"/></g></svg>
<svg style="left:291.7px;top:81.2px" width="7" height="7" viewBox="0 0 7 7"><path d="M3.5 0L4.4 2.6L7 3.5L4.4 4.4L3.5 7L2.6 4.4L0 3.5L2.6 2.6z" fill="#c8d820" stroke="#90a010" stroke-width="0.5"/></svg>
<svg style="left:303.5px;top:87.2px" width="10" height="5.5" viewBox="0 0 10 5.5"><g fill="#1a2ae0"><rect x="0" y="0" width="1.3" height="5.5"/><rect x="8.7" y="0" width="1.3" height="5.5"/><path d="M1.6 2.75L4.6 0.4V5.1z"/><path d="M8.4 2.75L5.4 0.4V5.1z"/></g></svg>
<svg style="left:307.8px;top:81.7px" width="5.8" height="5.8" viewBox="0 0 5.5 5.5"><path d="M0.5 0.5L5 5M5 0.5L0.5 5" stroke="#14145a" stroke-width="1.4"/></svg>
<div style="left:318.5px;top:85.5px;width:7px;height:1px;background:#a8a8a8;"></div>
<div style="left:318.5px;top:87.9px;width:7px;height:1px;background:#a8a8a8;"></div>
<div style="left:318.5px;top:90.3px;width:7px;height:1px;background:#a8a8a8;"></div>
<svg style="left:323.0px;top:82.5px" width="5.5" height="6" viewBox="0 0 5.5 6"><path d="M0 2h2.8V0L5.5 3L2.8 6V4H0z" fill="#e4e4e4" stroke="#a0a0a0" stroke-width="0.6"/></svg>
<div style="left:333.5px;top:85.5px;width:7px;height:1px;background:#a8a8a8;"></div>
<div style="left:333.5px;top:87.9px;width:7px;height:1px;background:#a8a8a8;"></div>
<div style="left:333.5px;top:90.3px;width:7px;height:1px;background:#a8a8a8;"></div>
<svg style="left:338.0px;top:82.5px" width="5.5" height="6" viewBox="0 0 5.5 6"><path d="M0 2h2.8V0L5.5 3L2.8 6V4H0z" fill="#e4e4e4" stroke="#a0a0a0" stroke-width="0.6"/></svg>
<svg style="left:351px;top:82.5px" width="11" height="10" viewBox="0 0 11 10"><rect x="0.5" y="1.5" width="5.5" height="6" fill="#9a9a9a"/><ellipse cx="3.25" cy="1.6" rx="2.75" ry="1.1" fill="#c4c4c4"/><ellipse cx="3.25" cy="7.5" rx="2.75" ry="1.1" fill="#8a8a8a"/><text x="6.5" y="9.5" font-size="5" font-family="Liberation Sans" font-weight="bold" fill="#6a6a6a">n</text></svg>
<div style="left:369.5px;top:83.5px;width:9.5px;height:1.2px;background:#3a3a3a;"></div>
<div style="left:369.5px;top:86.0px;width:7px;height:1.2px;background:#3a3a3a;"></div>
<div style="left:369.5px;top:88.5px;width:9.5px;height:1.2px;background:#3a3a3a;"></div>
<div style="left:369.5px;top:91.0px;width:7px;height:1.2px;background:#3a3a3a;"></div>
<div style="left:369.5px;top:83.5px;width:1.5px;height:9px;background:#3a3a3a;"></div>
<div style="left:384.5px;top:82.5px;width:9.5px;height:10px;background:#f4f6ff;border:1px solid #2a5ae0;box-sizing:border-box;"></div>
<div style="left:384.5px;top:82.5px;width:9.5px;height:3.5px;background:#2a5ae0;"></div>
<div style="left:384.5px;top:88px;width:9.5px;height:1.2px;background:#2a5ae0;"></div>
<div style="left:399.5px;top:83.5px;width:9.5px;height:8.5px;background:#2a5ae0;border:1px solid #1a3ab0;box-sizing:border-box;"></div>
<div style="left:400.5px;top:86px;width:7.5px;height:1px;background:#dfe8ff;"></div>
<div style="left:400.5px;top:88.5px;width:7.5px;height:1px;background:#dfe8ff;"></div>
<div style="left:413.5px;top:80.7px;width:13.2px;height:13.5px;background:#e8ecfa;border:1px solid #5b7fd6;border-radius:1.5px;box-sizing:border-box;"></div>
<svg style="left:416px;top:83.5px" width="8.5" height="8" viewBox="0 0 8.5 8"><ellipse cx="4.25" cy="3.2" rx="3.7" ry="2.7" fill="#fff" stroke="#3a4ab0" stroke-width="0.8"/><path d="M2 5L1 7.5L4 5.6" fill="#fff" stroke="#3a4ab0" stroke-width="0.7"/><path d="M2.2 3.2h4" stroke="#3a4ab0" stroke-width="0.7"/></svg>
<div style="left:431px;top:82.5px;width:8px;height:10px;background:#9a30c8;border-radius:1px;"></div>
<div style="left:429px;top:84.5px;width:4px;height:1.3px;background:#4a1480;"></div>
<div style="left:429px;top:88.5px;width:4px;height:1.3px;background:#4a1480;"></div>
<div style="left:432.5px;top:85.8px;width:4px;height:2.7px;background:#e4c8f4;"></div>
<span style="left:441.0px;top:83.02px;font-size:8.8px;line-height:10.56px;color:#111;font-weight:bold;">±</span>
<div style="left:453px;top:82.5px;width:8px;height:10px;background:#4a4a4a;border-radius:1px;"></div>
<div style="left:451px;top:84.5px;width:4px;height:1.3px;background:#1a1a1a;"></div>
<div style="left:451px;top:88.5px;width:4px;height:1.3px;background:#1a1a1a;"></div>
<div style="left:454.5px;top:85.8px;width:4px;height:2.7px;background:#d8d8d8;"></div>
<span style="left:463.0px;top:83.02px;font-size:8.8px;line-height:10.56px;color:#111;font-weight:bold;">±</span>
<svg style="left:472px;top:82.3px" width="8" height="4.2" viewBox="0 0 10 5.5"><g fill="#1a2ae0"><rect x="0" y="0" width="1.3" height="5.5"/><rect x="8.7" y="0" width="1.3" height="5.5"/><path d="M1.6 2.75L4.6 0.4V5.1z"/><path d="M8.4 2.75L5.4 0.4V5.1z"/></g></svg>
<div style="left:475px;top:86.5px;width:7.5px;height:6px;background:#7a40c8;border-radius:1px;"></div>
<div style="left:473px;top:88px;width:3px;height:1.2px;background:#3a2a9a;"></div>
<div style="left:476.5px;top:88px;width:3.5px;height:2.5px;background:#e4d0f8;"></div>
<span style="left:484.8px;top:83.02px;font-size:8.8px;line-height:10.56px;color:#111;font-weight:bold;">±</span>
<div style="left:493.5px;top:80.7px;width:13.2px;height:13.5px;background:#dfe4f8;border:1px solid #5b7fd6;border-radius:1.5px;box-sizing:border-box;"></div>
<div style="left:496px;top:83.5px;width:8.5px;height:8px;background:#f8f9ff;border:0.8px solid #3a4ab0;box-sizing:border-box;"></div>
<div style="left:499.5px;top:85.8px;width:4px;height:1px;background:#1a1a1a;"></div>
<div style="left:497.3px;top:85.5px;width:1.4px;height:1.4px;background:#1a1a1a;"></div>
<div style="left:499.5px;top:88.39999999999999px;width:4px;height:1px;background:#1a1a1a;"></div>
<div style="left:497.3px;top:88.1px;width:1.4px;height:1.4px;background:#1a1a1a;"></div>
<div style="left:508.5px;top:80.7px;width:13.2px;height:13.5px;background:#dfe4f8;border:1px solid #5b7fd6;border-radius:1.5px;box-sizing:border-box;"></div>
<div style="left:510.5px;top:83.5px;width:1.2px;height:8.5px;background:#2a3ab0;"></div>
<div style="left:512.3px;top:84.5px;width:2.2px;height:1px;background:#2a3ab0;"></div>
<div style="left:512.3px;top:87.1px;width:2.2px;height:1px;background:#2a3ab0;"></div>
<div style="left:512.3px;top:89.7px;width:2.2px;height:1px;background:#2a3ab0;"></div>
<svg style="left:513.5px;top:82.5px" width="7.5" height="9" viewBox="0 0 7.5 9"><path d="M3.7 0L4.8 2.8L7.5 3.4L5.4 5.4L6 8.5L3.7 7L1.4 8.5L2 5.4L0 3.4L2.7 2.8z" fill="#f0d020" stroke="#b89010" stroke-width="0.5"/></svg>
<svg style="left:528px;top:82.5px" width="7" height="10" viewBox="0 0 7 10"><g transform="translate(0,10) scale(1,-1)"><path d="M5.5 0.8C1.5 1.5 1 6 3.5 8.5" fill="none" stroke="#14145a" stroke-width="1.8"/><path d="M1.2 6.2L3.8 9.6L5.8 6.4z" fill="#14145a"/></g></svg>
<svg style="left:533px;top:82px" width="5.5" height="5.5" viewBox="0 0 5.5 5.5"><circle cx="2.75" cy="2.75" r="2.5" fill="#e82020"/><path d="M1.6 1.6L3.9 3.9M3.9 1.6L1.6 3.9" stroke="#fff" stroke-width="0.8"/></svg>
<svg style="left:543px;top:82.5px" width="7" height="10" viewBox="0 0 7 10"><g><path d="M5.5 0.8C1.5 1.5 1 6 3.5 8.5" fill="none" stroke="#14145a" stroke-width="1.8"/><path d="M1.2 6.2L3.8 9.6L5.8 6.4z" fill="#14145a"/></g></svg>
<svg style="left:548px;top:87px" width="5.5" height="5.5" viewBox="0 0 5.5 5.5"><circle cx="2.75" cy="2.75" r="2.5" fill="#e82020"/><path d="M1.6 1.6L3.9 3.9M3.9 1.6L1.6 3.9" stroke="#fff" stroke-width="0.8"/></svg>
<div style="left:560px;top:83px;width:8px;height:8px;background:#d8d8d8;border:0.8px solid #8a8a8a;box-sizing:border-box;"></div>
<svg style="left:558px;top:84px" width="5" height="8" viewBox="0 0 5 8"><path d="M4 0.5C1 1 0.5 4.5 2.5 6.5" fill="none" stroke="#3a3a3a" stroke-width="1.3"/><path d="M0.8 5L2.8 7.8L4.3 5.2z" fill="#3a3a3a"/></svg>
<div style="left:563px;top:85px;width:4px;height:0.8px;background:#8a8a8a;"></div>
<div style="left:563px;top:87px;width:4px;height:0.8px;background:#8a8a8a;"></div>
<div style="left:563px;top:89px;width:4px;height:0.8px;background:#8a8a8a;"></div>
<div style="left:575px;top:83px;width:8px;height:8px;background:#d8d8d8;border:0.8px solid #8a8a8a;box-sizing:border-box;"></div>
<svg style="left:573px;top:84px" width="5" height="8" viewBox="0 0 5 8"><path d="M4 0.5C1 1 0.5 4.5 2.5 6.5" fill="none" stroke="#3a3a3a" stroke-width="1.3"/><path d="M0.8 5L2.8 7.8L4.3 5.2z" fill="#3a3a3a"/></svg>
<div style="left:578px;top:85px;width:4px;height:0.8px;background:#8a8a8a;"></div>
<div style="left:578px;top:87px;width:4px;height:0.8px;background:#8a8a8a;"></div>
<div style="left:578px;top:89px;width:4px;height:0.8px;background:#8a8a8a;"></div>
<div style="left:589px;top:83px;width:7.5px;height:7px;background:#6a6a6a;border:0.8px solid #3a3a3a;box-sizing:border-box;"></div>
<div style="left:590.5px;top:84.5px;width:4.5px;height:1px;background:#e4e4e4;"></div>
<div style="left:590.5px;top:86.5px;width:4.5px;height:1px;background:#e4e4e4;"></div>
<svg style="left:591px;top:86.5px" width="8" height="6.5" viewBox="0 0 8 6.5"><path d="M0.6 3.3L3 5.6L7.4 0.7" fill="none" stroke="#2a9a30" stroke-width="1.6"/></svg>
<svg style="left:606px;top:83px" width="6" height="9" viewBox="0 0 6 9"><path d="M5 0.7C1.5 1.2 0.8 5 3 7.3" fill="none" stroke="#14145a" stroke-width="1.7"/><path d="M0.8 5.3L3.2 8.8L5 5.6z" fill="#14145a"/></svg>
<div style="left:612px;top:86px;width:4.5px;height:0.9px;background:#3a3a3a;"></div>
<div style="left:612px;top:88px;width:4.5px;height:0.9px;background:#3a3a3a;"></div>
<div style="left:612px;top:90px;width:4.5px;height:0.9px;background:#3a3a3a;"></div>
<div style="left:622.5px;top:83px;width:1.3px;height:4.5px;background:#2a2a2a;"></div>
<div style="left:627.0px;top:87px;width:5px;height:0.9px;background:#5a5a5a;"></div>
<div style="left:627.0px;top:89px;width:5px;height:0.9px;background:#5a5a5a;"></div>
<div style="left:627.0px;top:91px;width:5px;height:0.9px;background:#5a5a5a;"></div>
<div style="left:637px;top:83px;width:1.3px;height:4.5px;background:#2a2a2a;"></div>
<div style="left:638.3px;top:85px;width:2px;height:1.2px;background:#2a2a2a;"></div>
<div style="left:640px;top:85px;width:1.2px;height:3px;background:#2a2a2a;"></div>
<div style="left:641.5px;top:87px;width:5px;height:0.9px;background:#5a5a5a;"></div>
<div style="left:641.5px;top:89px;width:5px;height:0.9px;background:#5a5a5a;"></div>
<div style="left:641.5px;top:91px;width:5px;height:0.9px;background:#5a5a5a;"></div>
<svg style="left:655px;top:82.5px" width="7" height="10" viewBox="0 0 7 10"><g><path d="M5.5 0.8C1.5 1.5 1 6 3.5 8.5" fill="none" stroke="#14145a" stroke-width="1.8"/><path d="M1.2 6.2L3.8 9.6L5.8 6.4z" fill="#14145a"/></g></svg>
<div style="left:661.3px;top:84.5px;width:2.6px;height:8px;background:#2a5ae0;"></div>
<svg style="left:670px;top:82.5px" width="7" height="10" viewBox="0 0 7 10"><g transform="translate(0,10) scale(1,-1)"><path d="M5.5 0.8C1.5 1.5 1 6 3.5 8.5" fill="none" stroke="#14145a" stroke-width="1.8"/><path d="M1.2 6.2L3.8 9.6L5.8 6.4z" fill="#14145a"/></g></svg>
<div style="left:676.3px;top:82.5px;width:2.6px;height:8px;background:#2a5ae0;"></div>
<svg style="left:687.5px;top:82px" width="11" height="11" viewBox="0 0 11 11"><circle cx="4" cy="6.5" r="3.5" fill="#3a5ae0"/><circle cx="6.5" cy="3.3" r="2.4" fill="none" stroke="#b87820" stroke-width="1.1"/><path d="M8 5L10.3 7.8" stroke="#b87820" stroke-width="1.3"/><circle cx="3" cy="8" r="1.8" fill="#e87820"/></svg>
<svg style="left:702.5px;top:82.5px" width="11" height="10" viewBox="0 0 11 10"><circle cx="2.8" cy="2.2" r="1.6" fill="none" stroke="#2a2a2a" stroke-width="0.9"/><circle cx="7.6" cy="2.2" r="1.6" fill="none" stroke="#2a2a2a" stroke-width="0.9"/><path d="M0 1.8h11M4.4 2.2h1.6" stroke="#2a2a2a" stroke-width="0.8"/><path d="M5.5 5.5L9 7.5L5.5 9.5z" fill="#3aba4a"/></svg>
<svg style="left:720.5px;top:82px" width="11" height="11" viewBox="0 0 11 11"><path d="M2 5V3.3a2.4 2.4 0 0 1 4.8 0V5" fill="none" stroke="#c4c4c4" stroke-width="1.2"/><rect x="0.8" y="4.6" width="7.2" height="5.2" rx="0.8" fill="#ee7838" stroke="#d85818" stroke-width="0.5"/><rect x="1.3" y="5" width="6.2" height="1.6" fill="#f8a878"/><circle cx="8.6" cy="8.4" r="1.3" fill="#3a5ae0"/><rect x="7.2" y="9.1" width="2.8" height="1.7" fill="#3a5ae0"/></svg>
<div style="left:997.5px;top:82.5px;width:8px;height:9.5px;background:#eef0fc;border:0.8px solid #8a96d8;box-sizing:border-box;"></div>
<div style="left:997.5px;top:82.5px;width:8px;height:2.5px;background:#5a76d8;"></div>
<div style="left:999px;top:87px;width:5px;height:0.8px;background:#8a96d8;"></div>
<div style="left:999px;top:89px;width:3px;height:0.8px;background:#8a96d8;"></div>
<div style="left:1003.3px;top:88px;width:2.8px;height:4.5px;background:#e88a20;"></div>
<div style="left:282.5px;top:46px;width:2.3px;height:592px;background:#1e253e;"></div>
<div style="left:1016.9px;top:46px;width:2.1px;height:592px;background:#1e253e;"></div>
</div></body></html>
